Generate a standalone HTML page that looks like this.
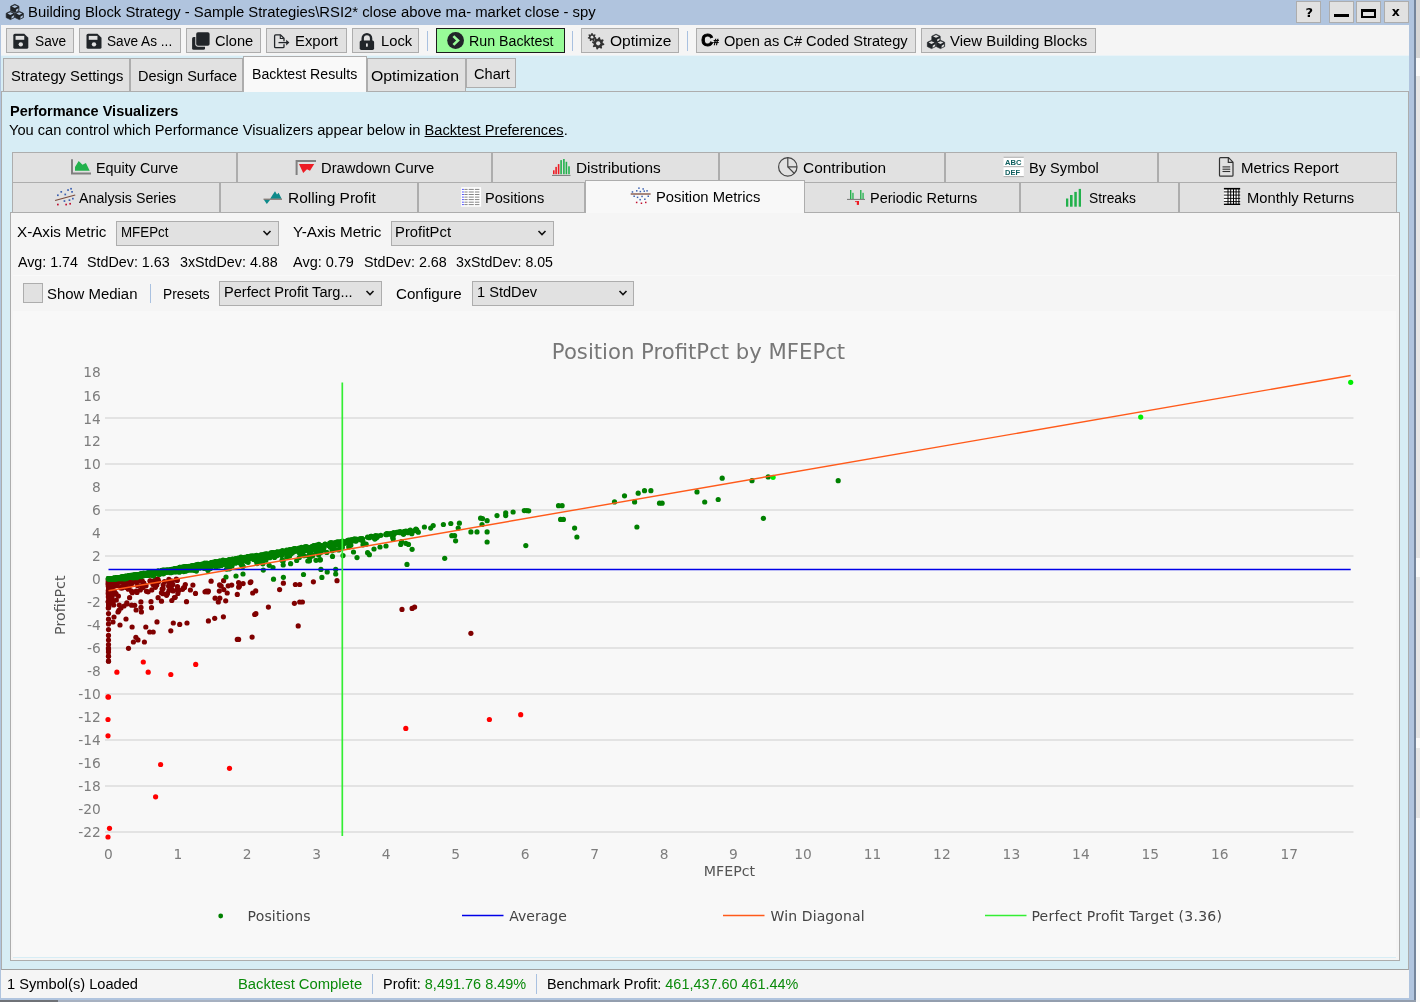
<!DOCTYPE html>
<html><head><meta charset="utf-8"><title>Building Block Strategy</title>
<style>
html,body{margin:0;padding:0}
body{width:1420px;height:1002px;overflow:hidden;background:#e4e4e4;position:relative;font-family:"Liberation Sans",sans-serif;font-size:15.5px;line-height:20px;color:#000}
div,span,svg{position:absolute;box-sizing:border-box}
span{white-space:nowrap;transform-origin:0 50%}
span span{position:static}
.btn{background:#e1e1e1;border:1px solid #adadad;top:28px;height:25px}
.tab{background:#e1e1e1;border:1px solid #adadad}
.sel{background:#e1e1e1;border:1px solid #adadad;height:25px}
.sep{width:1px;background:#a9c1e0}
.g{color:#0a8a0a}
</style></head><body><div id="w" style="left:0;top:0;width:1420px;height:1002px;will-change:transform">

<div style="left:0;top:0;width:1416px;height:1000px;background:#b0c4de"></div>
<div style="left:1414px;top:0;width:2px;height:1000px;background:#74859c"></div>
<div style="left:1416px;top:0;width:4px;height:1002px;background:#e6e6e6"></div>
<div style="left:1416px;top:0;width:4px;height:58px;background:#d6d6d6"></div>
<div style="left:1416px;top:58px;width:4px;height:18px;background:#fafafa"></div>
<div style="left:1416px;top:558px;width:4px;height:19px;background:#fafafa"></div>
<div style="left:1416px;top:738px;width:4px;height:10px;background:#fafafa"></div>
<div style="left:1416px;top:818px;width:4px;height:184px;background:#fafafa"></div>
<div style="left:0;top:1000px;width:1416px;height:2px;background:#939eae"></div>
<div style="left:58px;top:1000px;width:172px;height:2px;background:#a7b1c1"></div>
<div style="left:0;top:1000px;width:58px;height:2px;background:#6f7277"></div>
<div style="left:1px;top:25px;width:1408px;height:31px;background:#f5f5f5"></div>
<div style="left:1px;top:55px;width:1408px;height:1px;background:#eaf3f7"></div>
<div style="left:1px;top:56px;width:1408px;height:914px;background:#d7edf5"></div>
<div style="left:1px;top:91px;width:1408px;height:879px;border:1px solid #adadad;border-bottom-color:#a0a0a0"></div>
<div style="left:1px;top:970px;width:1408px;height:28px;background:#f5f5f5"></div>
<span style="left:27.9px;top:1.6px;transform:scaleX(0.9578);">Building Block Strategy - Sample Strategies\RSI2* close above ma- market close - spy</span>
<div class="btn" style="left:1296px;top:1px;width:25px;height:22px"></div>
<div class="btn" style="left:1329px;top:1px;width:25px;height:22px"></div>
<div class="btn" style="left:1356px;top:1px;width:25px;height:22px"></div>
<div class="btn" style="left:1384px;top:1px;width:25px;height:22px"></div>
<span style="left:1305.5px;top:2.6px;font-weight:bold;font-size:13px;font-family:'DejaVu Sans',sans-serif;line-height:20px">?</span>
<div style="left:1333.5px;top:14px;width:15px;height:3px;background:#000"></div>
<div style="left:1361px;top:9px;width:15px;height:9px;border:2px solid #000;border-top-width:3px"></div>
<span style="left:1391.8px;top:2.2px;font-weight:bold;font-size:12.5px;font-family:'DejaVu Sans',sans-serif;line-height:20px">x</span>
<div class="btn" style="left:6px;width:68px;"></div>
<span style="left:34.9px;top:30.6px;transform:scaleX(0.8828);">Save</span>
<div class="btn" style="left:79px;width:102px;"></div>
<span style="left:107.4px;top:30.6px;transform:scaleX(0.8798);">Save As ...</span>
<div class="btn" style="left:186px;width:75px;"></div>
<span style="left:214.9px;top:30.6px;transform:scaleX(0.9432);">Clone</span>
<div class="btn" style="left:266px;width:81px;"></div>
<span style="left:295.4px;top:30.6px;transform:scaleX(0.9596);">Export</span>
<div class="btn" style="left:352px;width:67px;"></div>
<span style="left:380.6px;top:30.6px;transform:scaleX(0.9527);">Lock</span>
<div class="btn" style="left:436px;width:129px;background:#98fb98;border-color:#1c1c1c;"></div>
<span style="left:469.1px;top:30.6px;transform:scaleX(0.9166);">Run Backtest</span>
<div class="btn" style="left:581px;width:98px;"></div>
<span style="left:609.9px;top:30.6px;transform:scaleX(1.0056);">Optimize</span>
<div class="btn" style="left:696px;width:220px;"></div>
<span style="left:723.8px;top:30.6px;transform:scaleX(0.9433);">Open as C# Coded Strategy</span>
<div class="btn" style="left:921px;width:175px;"></div>
<span style="left:950.1px;top:30.6px;transform:scaleX(0.9619);">View Building Blocks</span>
<div class="sep" style="left:427px;top:31px;height:20px"></div>
<div class="sep" style="left:572px;top:31px;height:20px"></div>
<div class="sep" style="left:687px;top:31px;height:20px"></div>
<div class="tab" style="left:3px;top:58px;width:127px;height:34px"></div>
<span style="left:10.7px;top:65.6px;transform:scaleX(0.9526);">Strategy Settings</span>
<div class="tab" style="left:130px;top:58px;width:113px;height:34px"></div>
<span style="left:137.7px;top:65.6px;transform:scaleX(0.9360);">Design Surface</span>
<div class="tab" style="left:367px;top:58px;width:99px;height:34px"></div>
<span style="left:371.4px;top:65.6px;transform:scaleX(1.0208);">Optimization</span>
<div class="tab" style="left:466px;top:58px;width:50px;height:30px"></div>
<span style="left:473.6px;top:63.6px;transform:scaleX(0.9418);">Chart</span>
<div class="tab" style="left:243px;top:56px;width:124px;height:36px;background:#f9f9f9;border-bottom:none"></div>
<span style="left:251.9px;top:63.6px;transform:scaleX(0.9113);">Backtest Results</span>
<span style="left:9.9px;top:100.6px;transform:scaleX(0.9356);font-weight:bold;">Performance Visualizers</span>
<span style="left:9.4px;top:120.1px;transform:scaleX(0.9439);">You can control which Performance Visualizers appear below in <u>Backtest Preferences</u>.</span>
<div class="tab" style="left:12px;top:152px;width:225px;height:31px"></div>
<span style="left:95.9px;top:157.6px;transform:scaleX(0.9264);">Equity Curve</span>
<div class="tab" style="left:237px;top:152px;width:255px;height:31px"></div>
<span style="left:320.9px;top:157.6px;transform:scaleX(0.9521);">Drawdown Curve</span>
<div class="tab" style="left:492px;top:152px;width:227px;height:31px"></div>
<span style="left:575.9px;top:157.6px;transform:scaleX(0.9932);">Distributions</span>
<div class="tab" style="left:719px;top:152px;width:226px;height:31px"></div>
<span style="left:802.9px;top:157.6px;transform:scaleX(0.9955);">Contribution</span>
<div class="tab" style="left:945px;top:152px;width:213px;height:31px"></div>
<span style="left:1028.8px;top:157.6px;transform:scaleX(0.9420);">By Symbol</span>
<div class="tab" style="left:1158px;top:152px;width:239px;height:31px"></div>
<span style="left:1240.9px;top:157.6px;transform:scaleX(0.9694);">Metrics Report</span>
<div class="tab" style="left:12px;top:182px;width:208px;height:31px"></div>
<span style="left:79.4px;top:187.6px;transform:scaleX(0.9173);">Analysis Series</span>
<div class="tab" style="left:220px;top:182px;width:198px;height:31px"></div>
<span style="left:287.9px;top:187.6px;transform:scaleX(0.9980);">Rolling Profit</span>
<div class="tab" style="left:418px;top:182px;width:167px;height:31px"></div>
<span style="left:485.4px;top:187.6px;transform:scaleX(0.9411);">Positions</span>
<div class="tab" style="left:804px;top:182px;width:216px;height:31px"></div>
<span style="left:870.4px;top:187.6px;transform:scaleX(0.9356);">Periodic Returns</span>
<div class="tab" style="left:1020px;top:182px;width:159px;height:31px"></div>
<span style="left:1089.1px;top:187.6px;transform:scaleX(0.8923);">Streaks</span>
<div class="tab" style="left:1179px;top:182px;width:218px;height:31px"></div>
<span style="left:1246.9px;top:187.6px;transform:scaleX(0.9499);">Monthly Returns</span>
<div style="left:10px;top:212px;width:1390px;height:749px;border:1px solid #adadad;background:#f5f5f5"></div>
<div style="left:13px;top:957px;width:1383px;height:1px;background:#d7edf5"></div>
<div class="tab" style="left:585px;top:180px;width:220px;height:33px;background:#f8f8f8;border-bottom:none"></div>
<span style="left:656.0px;top:186.6px;transform:scaleX(0.9533);">Position Metrics</span>
<div style="left:13px;top:311px;width:1383px;height:646px;background:#f8f8f8"></div>
<div style="left:13px;top:275px;width:1383px;height:1px;background:#f9f9f9"></div>
<span style="left:17.4px;top:221.6px;transform:scaleX(0.9798);">X-Axis Metric</span>
<div class="sel" style="left:116px;top:221px;width:163px"></div>
<span style="left:120.7px;top:222.1px;transform:scaleX(0.8608);">MFEPct</span>
<span style="left:293.3px;top:221.6px;transform:scaleX(0.9849);">Y-Axis Metric</span>
<div class="sel" style="left:391px;top:221px;width:163px"></div>
<span style="left:395.3px;top:222.1px;transform:scaleX(0.9560);">ProfitPct</span>
<span style="left:18.1px;top:251.6px;transform:scaleX(0.9192);">Avg: 1.74</span>
<span style="left:87.4px;top:251.6px;transform:scaleX(0.9229);">StdDev: 1.63</span>
<span style="left:179.9px;top:251.6px;transform:scaleX(0.9218);">3xStdDev: 4.88</span>
<span style="left:293.3px;top:251.6px;transform:scaleX(0.9338);">Avg: 0.79</span>
<span style="left:363.7px;top:251.6px;transform:scaleX(0.9240);">StdDev: 2.68</span>
<span style="left:456.0px;top:251.6px;transform:scaleX(0.9152);">3xStdDev: 8.05</span>
<div style="left:23px;top:283px;width:20px;height:20px;background:#e1e1e1;border:1px solid #adadad"></div>
<span style="left:46.9px;top:283.6px;transform:scaleX(0.9630);">Show Median</span>
<div class="sep" style="left:150px;top:284px;height:19px"></div>
<span style="left:162.7px;top:283.6px;transform:scaleX(0.8885);">Presets</span>
<div class="sel" style="left:219px;top:281px;width:163px"></div>
<span style="left:223.7px;top:281.6px;transform:scaleX(0.9412);">Perfect Profit Targ...</span>
<span style="left:396.3px;top:283.6px;transform:scaleX(0.9774);">Configure</span>
<div class="sel" style="left:472px;top:281px;width:162px"></div>
<span style="left:477.4px;top:281.6px;transform:scaleX(0.9425);">1 StdDev</span>
<svg style="left:262px;top:229px" width="10" height="8" viewBox="0 0 10 8"><path d="M1.5 2 L5 5.5 L8.5 2" fill="none" stroke="#111" stroke-width="1.6"/></svg>
<svg style="left:537px;top:229px" width="10" height="8" viewBox="0 0 10 8"><path d="M1.5 2 L5 5.5 L8.5 2" fill="none" stroke="#111" stroke-width="1.6"/></svg>
<svg style="left:365px;top:289px" width="10" height="8" viewBox="0 0 10 8"><path d="M1.5 2 L5 5.5 L8.5 2" fill="none" stroke="#111" stroke-width="1.6"/></svg>
<svg style="left:618px;top:289px" width="10" height="8" viewBox="0 0 10 8"><path d="M1.5 2 L5 5.5 L8.5 2" fill="none" stroke="#111" stroke-width="1.6"/></svg>
<span style="left:7.1px;top:973.6px;transform:scaleX(0.9444);">1 Symbol(s) Loaded</span>
<span style="left:237.9px;top:973.6px;transform:scaleX(0.9547);color:#0a8a0a;">Backtest Complete</span>
<div class="sep" style="left:372px;top:974px;height:20px"></div>
<span style="left:383.4px;top:973.6px;transform:scaleX(0.9336);">Profit: <span class="g">8,491.76 8.49%</span></span>
<div class="sep" style="left:536px;top:974px;height:20px"></div>
<span style="left:546.9px;top:973.6px;transform:scaleX(0.9284);">Benchmark Profit: <span class="g">461,437.60 461.44%</span></span>
<svg style="left:0;top:0" width="1420" height="1002" viewBox="0 0 1420 1002" font-family="'DejaVu Sans',Verdana,sans-serif">
<line x1="105" x2="1353.5" y1="418.0" y2="418.0" stroke="#dcdcdc" stroke-width="1.5"/>
<line x1="105" x2="1353.5" y1="464.0" y2="464.0" stroke="#dcdcdc" stroke-width="1.5"/>
<line x1="105" x2="1353.5" y1="510.0" y2="510.0" stroke="#dcdcdc" stroke-width="1.5"/>
<line x1="105" x2="1353.5" y1="556.0" y2="556.0" stroke="#dcdcdc" stroke-width="1.5"/>
<line x1="105" x2="1353.5" y1="602.0" y2="602.0" stroke="#dcdcdc" stroke-width="1.5"/>
<line x1="105" x2="1353.5" y1="648.0" y2="648.0" stroke="#dcdcdc" stroke-width="1.5"/>
<line x1="105" x2="1353.5" y1="694.0" y2="694.0" stroke="#dcdcdc" stroke-width="1.5"/>
<line x1="105" x2="1353.5" y1="740.0" y2="740.0" stroke="#dcdcdc" stroke-width="1.5"/>
<line x1="105" x2="1353.5" y1="786.0" y2="786.0" stroke="#dcdcdc" stroke-width="1.5"/>
<line x1="105" x2="1353.5" y1="832.0" y2="832.0" stroke="#dcdcdc" stroke-width="1.5"/>
<g font-size="13.8" fill="#7d7d7d" text-anchor="end">
<text x="100.8" y="377.0">18</text>
<text x="100.8" y="401.0">16</text>
<text x="100.8" y="424.0">14</text>
<text x="100.8" y="446.0">12</text>
<text x="100.8" y="469.0">10</text>
<text x="100.8" y="492.0">8</text>
<text x="100.8" y="515.0">6</text>
<text x="100.8" y="538.0">4</text>
<text x="100.8" y="561.0">2</text>
<text x="100.8" y="584.0">0</text>
<text x="100.8" y="607.0">-2</text>
<text x="100.8" y="630.0">-4</text>
<text x="100.8" y="653.0">-6</text>
<text x="100.8" y="676.0">-8</text>
<text x="100.8" y="699.0">-10</text>
<text x="100.8" y="722.0">-12</text>
<text x="100.8" y="745.0">-14</text>
<text x="100.8" y="768.0">-16</text>
<text x="100.8" y="791.0">-18</text>
<text x="100.8" y="814.0">-20</text>
<text x="100.8" y="837.0">-22</text>
</g><g font-size="13.8" fill="#7d7d7d" text-anchor="middle">
<text x="108.3" y="859">0</text>
<text x="177.8" y="859">1</text>
<text x="247.2" y="859">2</text>
<text x="316.7" y="859">3</text>
<text x="386.2" y="859">4</text>
<text x="455.7" y="859">5</text>
<text x="525.1" y="859">6</text>
<text x="594.6" y="859">7</text>
<text x="664.1" y="859">8</text>
<text x="733.5" y="859">9</text>
<text x="803.0" y="859">10</text>
<text x="872.5" y="859">11</text>
<text x="941.9" y="859">12</text>
<text x="1011.4" y="859">13</text>
<text x="1080.9" y="859">14</text>
<text x="1150.3" y="859">15</text>
<text x="1219.8" y="859">16</text>
<text x="1289.3" y="859">17</text>
</g>
<text x="698.5" y="359.3" font-size="21.2" fill="#777" text-anchor="middle">Position ProfitPct by MFEPct</text>
<text x="729.5" y="876" font-size="14.2" fill="#555" text-anchor="middle">MFEPct</text>
<text transform="translate(65,605.2) rotate(-90)" font-size="14.3" fill="#555" text-anchor="middle">ProfitPct</text>
<g fill="#800000">
<circle cx="113.9" cy="583.2" r="2.6"/><circle cx="109.6" cy="580.2" r="2.6"/><circle cx="112.7" cy="584.5" r="2.6"/><circle cx="110.5" cy="582.7" r="2.6"/><circle cx="113.9" cy="590.6" r="2.6"/><circle cx="114.5" cy="580.4" r="2.6"/><circle cx="123.4" cy="582.7" r="2.6"/><circle cx="109.4" cy="586.0" r="2.6"/><circle cx="132.0" cy="582.9" r="2.6"/><circle cx="113.8" cy="582.0" r="2.6"/><circle cx="108.5" cy="580.8" r="2.6"/><circle cx="109.2" cy="581.7" r="2.6"/><circle cx="115.2" cy="585.7" r="2.6"/><circle cx="128.9" cy="588.3" r="2.6"/><circle cx="111.4" cy="603.0" r="2.6"/><circle cx="115.3" cy="585.3" r="2.6"/><circle cx="122.1" cy="587.9" r="2.6"/><circle cx="111.4" cy="586.5" r="2.6"/><circle cx="108.8" cy="579.1" r="2.6"/><circle cx="113.9" cy="580.9" r="2.6"/><circle cx="113.2" cy="580.0" r="2.6"/><circle cx="120.9" cy="587.9" r="2.6"/><circle cx="116.3" cy="600.0" r="2.6"/><circle cx="141.9" cy="588.1" r="2.6"/><circle cx="117.0" cy="579.0" r="2.6"/><circle cx="108.7" cy="583.5" r="2.6"/><circle cx="132.4" cy="582.0" r="2.6"/><circle cx="114.1" cy="579.1" r="2.6"/><circle cx="112.0" cy="597.7" r="2.6"/><circle cx="114.5" cy="593.0" r="2.6"/><circle cx="108.4" cy="580.8" r="2.6"/><circle cx="109.7" cy="593.4" r="2.6"/><circle cx="109.0" cy="600.6" r="2.6"/><circle cx="110.5" cy="596.1" r="2.6"/><circle cx="113.3" cy="582.1" r="2.6"/><circle cx="131.9" cy="583.2" r="2.6"/><circle cx="116.6" cy="579.6" r="2.6"/><circle cx="109.1" cy="590.0" r="2.6"/><circle cx="110.5" cy="580.3" r="2.6"/><circle cx="111.4" cy="587.7" r="2.6"/><circle cx="115.7" cy="580.4" r="2.6"/><circle cx="117.3" cy="585.5" r="2.6"/><circle cx="111.4" cy="597.5" r="2.6"/><circle cx="110.3" cy="580.2" r="2.6"/><circle cx="109.5" cy="580.3" r="2.6"/><circle cx="114.5" cy="592.0" r="2.6"/><circle cx="109.5" cy="584.6" r="2.6"/><circle cx="114.2" cy="585.6" r="2.6"/><circle cx="112.0" cy="585.3" r="2.6"/><circle cx="108.4" cy="579.5" r="2.6"/><circle cx="112.1" cy="581.2" r="2.6"/><circle cx="118.1" cy="581.2" r="2.6"/><circle cx="120.4" cy="581.2" r="2.6"/><circle cx="109.0" cy="584.2" r="2.6"/><circle cx="111.7" cy="582.3" r="2.6"/><circle cx="118.4" cy="581.0" r="2.6"/><circle cx="116.0" cy="593.5" r="2.6"/><circle cx="112.5" cy="584.6" r="2.6"/><circle cx="126.2" cy="586.5" r="2.6"/><circle cx="109.7" cy="579.6" r="2.6"/><circle cx="108.9" cy="582.2" r="2.6"/><circle cx="108.9" cy="587.4" r="2.6"/><circle cx="112.1" cy="582.0" r="2.6"/><circle cx="113.3" cy="601.2" r="2.6"/><circle cx="125.3" cy="582.2" r="2.6"/><circle cx="119.0" cy="579.8" r="2.6"/><circle cx="171.5" cy="581.1" r="2.6"/><circle cx="157.4" cy="580.4" r="2.6"/><circle cx="111.5" cy="579.7" r="2.6"/><circle cx="116.8" cy="581.1" r="2.6"/><circle cx="119.2" cy="582.0" r="2.6"/><circle cx="151.7" cy="581.8" r="2.6"/><circle cx="131.6" cy="580.1" r="2.6"/><circle cx="115.4" cy="579.2" r="2.6"/><circle cx="143.8" cy="583.0" r="2.6"/><circle cx="120.0" cy="580.3" r="2.6"/><circle cx="154.2" cy="581.4" r="2.6"/><circle cx="114.7" cy="579.2" r="2.6"/><circle cx="123.8" cy="579.1" r="2.6"/><circle cx="136.0" cy="579.3" r="2.6"/><circle cx="156.1" cy="580.0" r="2.6"/><circle cx="177.3" cy="580.0" r="2.6"/><circle cx="154.9" cy="580.7" r="2.6"/><circle cx="123.8" cy="582.1" r="2.6"/><circle cx="138.2" cy="581.3" r="2.6"/><circle cx="119.1" cy="581.9" r="2.6"/><circle cx="177.1" cy="580.4" r="2.6"/><circle cx="172.2" cy="581.4" r="2.6"/><circle cx="142.2" cy="580.8" r="2.6"/><circle cx="121.8" cy="580.4" r="2.6"/><circle cx="164.5" cy="581.6" r="2.6"/><circle cx="128.6" cy="583.2" r="2.6"/><circle cx="141.2" cy="580.9" r="2.6"/><circle cx="118.1" cy="580.3" r="2.6"/><circle cx="155.9" cy="579.1" r="2.6"/><circle cx="156.8" cy="585.1" r="2.6"/><circle cx="111.4" cy="582.3" r="2.6"/><circle cx="158.0" cy="579.4" r="2.6"/><circle cx="130.7" cy="580.2" r="2.6"/><circle cx="112.0" cy="582.5" r="2.6"/><circle cx="132.5" cy="581.0" r="2.6"/><circle cx="156.6" cy="581.7" r="2.6"/><circle cx="127.5" cy="582.0" r="2.6"/><circle cx="176.3" cy="579.2" r="2.6"/><circle cx="114.7" cy="579.1" r="2.6"/><circle cx="158.7" cy="581.4" r="2.6"/><circle cx="119.1" cy="581.7" r="2.6"/><circle cx="168.9" cy="579.3" r="2.6"/><circle cx="134.7" cy="580.2" r="2.6"/><circle cx="114.6" cy="594.2" r="2.6"/><circle cx="171.8" cy="600.5" r="2.6"/><circle cx="195.5" cy="593.4" r="2.6"/><circle cx="146.0" cy="585.7" r="2.6"/><circle cx="184.5" cy="587.4" r="2.6"/><circle cx="183.5" cy="587.8" r="2.6"/><circle cx="151.0" cy="601.7" r="2.6"/><circle cx="172.9" cy="584.6" r="2.6"/><circle cx="169.0" cy="590.4" r="2.6"/><circle cx="142.1" cy="585.5" r="2.6"/><circle cx="219.3" cy="591.1" r="2.6"/><circle cx="205.0" cy="591.8" r="2.6"/><circle cx="135.6" cy="581.8" r="2.6"/><circle cx="186.5" cy="601.7" r="2.6"/><circle cx="118.9" cy="610.4" r="2.6"/><circle cx="129.6" cy="597.7" r="2.6"/><circle cx="239.3" cy="586.3" r="2.6"/><circle cx="156.5" cy="584.4" r="2.6"/><circle cx="243.1" cy="583.6" r="2.6"/><circle cx="238.6" cy="582.6" r="2.6"/><circle cx="171.4" cy="588.6" r="2.6"/><circle cx="137.5" cy="585.6" r="2.6"/><circle cx="156.6" cy="581.0" r="2.6"/><circle cx="207.8" cy="592.0" r="2.6"/><circle cx="150.4" cy="581.2" r="2.6"/><circle cx="158.1" cy="597.7" r="2.6"/><circle cx="132.3" cy="592.7" r="2.6"/><circle cx="128.3" cy="589.2" r="2.6"/><circle cx="146.5" cy="591.3" r="2.6"/><circle cx="163.0" cy="593.7" r="2.6"/><circle cx="126.8" cy="602.9" r="2.6"/><circle cx="231.7" cy="585.1" r="2.6"/><circle cx="161.4" cy="592.8" r="2.6"/><circle cx="124.7" cy="582.0" r="2.6"/><circle cx="140.3" cy="590.0" r="2.6"/><circle cx="185.3" cy="584.5" r="2.6"/><circle cx="168.6" cy="586.1" r="2.6"/><circle cx="152.3" cy="581.8" r="2.6"/><circle cx="119.3" cy="605.1" r="2.6"/><circle cx="167.5" cy="593.4" r="2.6"/><circle cx="163.2" cy="585.1" r="2.6"/><circle cx="206.4" cy="591.2" r="2.6"/><circle cx="176.9" cy="589.7" r="2.6"/><circle cx="175.2" cy="597.3" r="2.6"/><circle cx="182.6" cy="589.3" r="2.6"/><circle cx="154.3" cy="584.7" r="2.6"/><circle cx="136.2" cy="591.2" r="2.6"/><circle cx="130.9" cy="584.8" r="2.6"/><circle cx="208.4" cy="591.0" r="2.6"/><circle cx="141.0" cy="607.4" r="2.6"/><circle cx="141.4" cy="611.9" r="2.6"/><circle cx="152.2" cy="581.7" r="2.6"/><circle cx="250.2" cy="582.6" r="2.6"/><circle cx="137.0" cy="592.5" r="2.6"/><circle cx="174.4" cy="597.6" r="2.6"/><circle cx="171.1" cy="585.2" r="2.6"/><circle cx="153.0" cy="584.6" r="2.6"/><circle cx="151.5" cy="607.7" r="2.6"/><circle cx="252.7" cy="593.0" r="2.6"/><circle cx="227.2" cy="593.0" r="2.6"/><circle cx="190.4" cy="590.0" r="2.6"/><circle cx="177.9" cy="593.4" r="2.6"/><circle cx="151.8" cy="589.9" r="2.6"/><circle cx="126.1" cy="587.5" r="2.6"/><circle cx="161.5" cy="601.2" r="2.6"/><circle cx="134.7" cy="605.3" r="2.6"/><circle cx="169.6" cy="584.7" r="2.6"/><circle cx="179.0" cy="590.3" r="2.6"/><circle cx="162.1" cy="589.1" r="2.6"/><circle cx="150.0" cy="580.8" r="2.6"/><circle cx="166.6" cy="595.3" r="2.6"/><circle cx="163.1" cy="588.6" r="2.6"/><circle cx="223.8" cy="589.6" r="2.6"/><circle cx="118.4" cy="596.1" r="2.6"/><circle cx="169.0" cy="583.1" r="2.6"/><circle cx="143.1" cy="587.4" r="2.6"/><circle cx="173.1" cy="590.9" r="2.6"/><circle cx="192.9" cy="585.1" r="2.6"/><circle cx="155.4" cy="587.3" r="2.6"/><circle cx="143.4" cy="582.8" r="2.6"/><circle cx="148.1" cy="591.8" r="2.6"/><circle cx="128.2" cy="581.9" r="2.6"/><circle cx="131.6" cy="591.2" r="2.6"/><circle cx="126.5" cy="582.2" r="2.6"/><circle cx="211.1" cy="581.2" r="2.6"/><circle cx="219.6" cy="584.9" r="2.6"/><circle cx="122.1" cy="586.5" r="2.6"/><circle cx="221.2" cy="586.1" r="2.6"/><circle cx="238.7" cy="587.2" r="2.6"/><circle cx="177.5" cy="586.6" r="2.6"/><circle cx="136.1" cy="610.0" r="2.6"/><circle cx="113.7" cy="605.0" r="2.6"/><circle cx="131.6" cy="605.2" r="2.6"/><circle cx="140.9" cy="601.9" r="2.6"/><circle cx="114.9" cy="593.1" r="2.6"/><circle cx="108.5" cy="583.0" r="2.6"/><circle cx="108.6" cy="587.9" r="2.6"/><circle cx="108.7" cy="588.5" r="2.6"/><circle cx="108.6" cy="604.1" r="2.6"/><circle cx="108.4" cy="601.7" r="2.6"/><circle cx="108.3" cy="608.1" r="2.6"/><circle cx="108.3" cy="601.5" r="2.6"/><circle cx="108.5" cy="584.6" r="2.6"/><circle cx="108.5" cy="594.6" r="2.6"/><circle cx="108.5" cy="582.8" r="2.6"/><circle cx="108.6" cy="588.3" r="2.6"/><circle cx="108.8" cy="590.9" r="2.6"/><circle cx="108.5" cy="586.1" r="2.6"/><circle cx="108.8" cy="589.0" r="2.6"/><circle cx="108.6" cy="604.9" r="2.6"/><circle cx="108.5" cy="602.5" r="2.6"/><circle cx="108.4" cy="582.4" r="2.6"/><circle cx="108.3" cy="592.9" r="2.6"/><circle cx="108.7" cy="585.3" r="2.6"/><circle cx="108.5" cy="602.7" r="2.6"/><circle cx="108.4" cy="583.7" r="2.6"/><circle cx="108.6" cy="592.2" r="2.6"/><circle cx="108.8" cy="606.9" r="2.6"/><circle cx="108.4" cy="596.4" r="2.6"/><circle cx="108.5" cy="580.1" r="2.6"/><circle cx="108.5" cy="607.4" r="2.6"/><circle cx="108.5" cy="597.2" r="2.6"/><circle cx="108.7" cy="581.0" r="2.6"/><circle cx="108.8" cy="582.4" r="2.6"/><circle cx="108.5" cy="601.2" r="2.6"/><circle cx="108.3" cy="590.7" r="2.6"/><circle cx="108.4" cy="593.7" r="2.6"/><circle cx="108.3" cy="583.7" r="2.6"/><circle cx="108.4" cy="581.5" r="2.6"/><circle cx="108.3" cy="585.0" r="2.6"/><circle cx="108.6" cy="583.3" r="2.6"/><circle cx="108.7" cy="591.9" r="2.6"/><circle cx="108.4" cy="586.5" r="2.6"/><circle cx="108.7" cy="580.5" r="2.6"/><circle cx="108.7" cy="582.0" r="2.6"/><circle cx="108.5" cy="613.5" r="2.6"/><circle cx="108.5" cy="619.2" r="2.6"/><circle cx="108.5" cy="623.9" r="2.6"/><circle cx="108.5" cy="629.6" r="2.6"/><circle cx="108.5" cy="635.4" r="2.6"/><circle cx="108.5" cy="640.0" r="2.6"/><circle cx="108.5" cy="644.5" r="2.6"/><circle cx="108.5" cy="648.0" r="2.6"/><circle cx="108.5" cy="652.0" r="2.6"/><circle cx="108.5" cy="656.0" r="2.6"/><circle cx="108.5" cy="661.2" r="2.6"/><circle cx="128.5" cy="648.3" r="2.6"/><circle cx="133.4" cy="642.0" r="2.6"/><circle cx="135.9" cy="637.3" r="2.6"/><circle cx="138.0" cy="639.9" r="2.6"/><circle cx="144.4" cy="642.0" r="2.6"/><circle cx="149.7" cy="632.0" r="2.6"/><circle cx="153.2" cy="632.0" r="2.6"/><circle cx="170.8" cy="630.8" r="2.6"/><circle cx="132.1" cy="627.0" r="2.6"/><circle cx="145.8" cy="627.0" r="2.6"/><circle cx="157.0" cy="621.9" r="2.6"/><circle cx="173.3" cy="623.0" r="2.6"/><circle cx="179.7" cy="624.4" r="2.6"/><circle cx="187.0" cy="623.0" r="2.6"/><circle cx="208.4" cy="620.9" r="2.6"/><circle cx="214.7" cy="618.3" r="2.6"/><circle cx="223.4" cy="616.8" r="2.6"/><circle cx="237.3" cy="639.4" r="2.6"/><circle cx="238.6" cy="639.4" r="2.6"/><circle cx="252.1" cy="637.1" r="2.6"/><circle cx="254.7" cy="614.5" r="2.6"/><circle cx="255.9" cy="613.7" r="2.6"/><circle cx="268.4" cy="607.1" r="2.6"/><circle cx="294.4" cy="603.3" r="2.6"/><circle cx="299.7" cy="602.0" r="2.6"/><circle cx="302.4" cy="602.0" r="2.6"/><circle cx="298.2" cy="625.9" r="2.6"/><circle cx="337.0" cy="580.7" r="2.6"/><circle cx="313.4" cy="581.8" r="2.6"/><circle cx="295.4" cy="584.5" r="2.6"/><circle cx="299.7" cy="584.5" r="2.6"/><circle cx="283.4" cy="583.2" r="2.6"/><circle cx="279.6" cy="589.6" r="2.6"/><circle cx="255.7" cy="590.9" r="2.6"/><circle cx="250.9" cy="581.8" r="2.6"/><circle cx="237.3" cy="594.4" r="2.6"/><circle cx="225.7" cy="600.8" r="2.6"/><circle cx="219.8" cy="598.2" r="2.6"/><circle cx="215.1" cy="598.2" r="2.6"/><circle cx="218.3" cy="602.0" r="2.6"/><circle cx="228.2" cy="585.8" r="2.6"/><circle cx="223.6" cy="580.7" r="2.6"/><circle cx="402.0" cy="609.4" r="2.6"/><circle cx="412.1" cy="608.4" r="2.6"/><circle cx="414.6" cy="607.1" r="2.6"/><circle cx="470.9" cy="633.3" r="2.6"/><circle cx="108.5" cy="661.0" r="2.6"/><circle cx="108.5" cy="656.3" r="2.6"/><circle cx="108.5" cy="649.6" r="2.6"/><circle cx="114.0" cy="617.0" r="2.6"/><circle cx="118.0" cy="612.0" r="2.6"/><circle cx="121.0" cy="608.0" r="2.6"/><circle cx="124.0" cy="606.0" r="2.6"/><circle cx="127.0" cy="604.0" r="2.6"/><circle cx="113.0" cy="622.0" r="2.6"/><circle cx="120.0" cy="625.0" r="2.6"/><circle cx="126.0" cy="619.0" r="2.6"/>
</g>
<g fill="#ff0000">
<circle cx="108.5" cy="697.0" r="2.6"/><circle cx="116.9" cy="672.2" r="2.6"/><circle cx="143.3" cy="662.0" r="2.6"/><circle cx="148.2" cy="672.2" r="2.6"/><circle cx="170.8" cy="674.5" r="2.6"/><circle cx="195.7" cy="664.4" r="2.6"/><circle cx="108.0" cy="696.9" r="2.6"/><circle cx="108.0" cy="719.5" r="2.6"/><circle cx="108.0" cy="735.8" r="2.6"/><circle cx="160.6" cy="764.5" r="2.6"/><circle cx="229.5" cy="768.3" r="2.6"/><circle cx="155.6" cy="796.8" r="2.6"/><circle cx="109.5" cy="828.3" r="2.6"/><circle cx="108.0" cy="837.0" r="2.6"/><circle cx="405.8" cy="728.4" r="2.6"/><circle cx="489.4" cy="719.5" r="2.6"/><circle cx="520.7" cy="714.7" r="2.6"/>
</g>
<g fill="#008000">
<circle cx="120.8" cy="577.6" r="2.6"/><circle cx="112.9" cy="578.5" r="2.6"/><circle cx="115.6" cy="578.1" r="2.6"/><circle cx="183.7" cy="571.6" r="2.6"/><circle cx="257.7" cy="559.8" r="2.6"/><circle cx="237.7" cy="559.5" r="2.6"/><circle cx="168.9" cy="570.3" r="2.6"/><circle cx="212.3" cy="563.0" r="2.6"/><circle cx="229.2" cy="560.5" r="2.6"/><circle cx="267.3" cy="557.6" r="2.6"/><circle cx="149.7" cy="575.0" r="2.6"/><circle cx="192.6" cy="568.0" r="2.6"/><circle cx="199.1" cy="566.4" r="2.6"/><circle cx="338.0" cy="544.6" r="2.6"/><circle cx="349.8" cy="542.8" r="2.6"/><circle cx="155.6" cy="572.3" r="2.6"/><circle cx="139.7" cy="575.0" r="2.6"/><circle cx="153.9" cy="573.7" r="2.6"/><circle cx="176.0" cy="570.5" r="2.6"/><circle cx="145.0" cy="574.3" r="2.6"/><circle cx="176.3" cy="569.5" r="2.6"/><circle cx="172.1" cy="572.1" r="2.6"/><circle cx="181.8" cy="570.5" r="2.6"/><circle cx="320.9" cy="545.7" r="2.6"/><circle cx="123.4" cy="576.9" r="2.6"/><circle cx="112.4" cy="578.6" r="2.6"/><circle cx="110.3" cy="578.7" r="2.6"/><circle cx="142.9" cy="575.0" r="2.6"/><circle cx="158.8" cy="573.9" r="2.6"/><circle cx="243.2" cy="559.9" r="2.6"/><circle cx="120.4" cy="577.9" r="2.6"/><circle cx="318.2" cy="545.5" r="2.6"/><circle cx="237.8" cy="559.1" r="2.6"/><circle cx="347.8" cy="543.0" r="2.6"/><circle cx="164.0" cy="571.7" r="2.6"/><circle cx="131.2" cy="575.9" r="2.6"/><circle cx="348.5" cy="540.8" r="2.6"/><circle cx="125.8" cy="577.4" r="2.6"/><circle cx="189.2" cy="568.4" r="2.6"/><circle cx="298.5" cy="551.0" r="2.6"/><circle cx="189.1" cy="566.4" r="2.6"/><circle cx="332.5" cy="543.0" r="2.6"/><circle cx="304.4" cy="549.2" r="2.6"/><circle cx="193.5" cy="569.5" r="2.6"/><circle cx="266.3" cy="553.9" r="2.6"/><circle cx="309.2" cy="547.6" r="2.6"/><circle cx="175.8" cy="569.4" r="2.6"/><circle cx="194.3" cy="566.5" r="2.6"/><circle cx="299.2" cy="552.7" r="2.6"/><circle cx="152.6" cy="573.1" r="2.6"/><circle cx="157.3" cy="571.5" r="2.6"/><circle cx="170.2" cy="569.9" r="2.6"/><circle cx="133.1" cy="576.2" r="2.6"/><circle cx="330.2" cy="543.4" r="2.6"/><circle cx="218.3" cy="562.5" r="2.6"/><circle cx="321.4" cy="546.8" r="2.6"/><circle cx="141.6" cy="574.4" r="2.6"/><circle cx="114.1" cy="578.4" r="2.6"/><circle cx="204.5" cy="568.3" r="2.6"/><circle cx="161.7" cy="573.0" r="2.6"/><circle cx="147.6" cy="573.3" r="2.6"/><circle cx="137.6" cy="575.1" r="2.6"/><circle cx="109.7" cy="578.7" r="2.6"/><circle cx="111.4" cy="578.7" r="2.6"/><circle cx="293.5" cy="548.9" r="2.6"/><circle cx="247.0" cy="557.0" r="2.6"/><circle cx="211.7" cy="565.2" r="2.6"/><circle cx="128.7" cy="576.2" r="2.6"/><circle cx="169.8" cy="570.8" r="2.6"/><circle cx="165.5" cy="570.4" r="2.6"/><circle cx="125.5" cy="577.5" r="2.6"/><circle cx="161.3" cy="570.5" r="2.6"/><circle cx="109.5" cy="578.7" r="2.6"/><circle cx="213.4" cy="563.3" r="2.6"/><circle cx="197.2" cy="567.3" r="2.6"/><circle cx="206.7" cy="565.9" r="2.6"/><circle cx="211.5" cy="562.5" r="2.6"/><circle cx="320.0" cy="545.6" r="2.6"/><circle cx="121.4" cy="577.2" r="2.6"/><circle cx="241.3" cy="564.8" r="2.6"/><circle cx="108.4" cy="578.7" r="2.6"/><circle cx="162.0" cy="570.4" r="2.6"/><circle cx="111.6" cy="578.7" r="2.6"/><circle cx="237.0" cy="560.2" r="2.6"/><circle cx="203.0" cy="566.4" r="2.6"/><circle cx="264.7" cy="554.0" r="2.6"/><circle cx="286.7" cy="557.0" r="2.6"/><circle cx="246.0" cy="559.4" r="2.6"/><circle cx="274.3" cy="555.7" r="2.6"/><circle cx="142.5" cy="574.0" r="2.6"/><circle cx="260.6" cy="557.4" r="2.6"/><circle cx="290.2" cy="549.9" r="2.6"/><circle cx="210.3" cy="563.3" r="2.6"/><circle cx="158.2" cy="571.9" r="2.6"/><circle cx="158.1" cy="571.0" r="2.6"/><circle cx="127.1" cy="576.5" r="2.6"/><circle cx="172.4" cy="571.2" r="2.6"/><circle cx="276.6" cy="552.4" r="2.6"/><circle cx="156.3" cy="572.6" r="2.6"/><circle cx="239.3" cy="562.5" r="2.6"/><circle cx="126.3" cy="576.7" r="2.6"/><circle cx="232.0" cy="565.9" r="2.6"/><circle cx="282.5" cy="550.5" r="2.6"/><circle cx="154.1" cy="572.5" r="2.6"/><circle cx="248.5" cy="557.1" r="2.6"/><circle cx="307.7" cy="549.2" r="2.6"/><circle cx="146.4" cy="575.0" r="2.6"/><circle cx="112.1" cy="578.7" r="2.6"/><circle cx="168.9" cy="570.3" r="2.6"/><circle cx="347.3" cy="540.7" r="2.6"/><circle cx="241.8" cy="562.6" r="2.6"/><circle cx="215.1" cy="562.5" r="2.6"/><circle cx="139.3" cy="574.4" r="2.6"/><circle cx="181.4" cy="568.3" r="2.6"/><circle cx="126.1" cy="577.0" r="2.6"/><circle cx="289.2" cy="556.1" r="2.6"/><circle cx="140.3" cy="574.1" r="2.6"/><circle cx="324.0" cy="547.6" r="2.6"/><circle cx="139.8" cy="574.5" r="2.6"/><circle cx="161.8" cy="573.4" r="2.6"/><circle cx="130.1" cy="577.2" r="2.6"/><circle cx="202.8" cy="567.6" r="2.6"/><circle cx="108.3" cy="578.7" r="2.6"/><circle cx="121.1" cy="578.6" r="2.6"/><circle cx="265.7" cy="557.3" r="2.6"/><circle cx="224.8" cy="563.4" r="2.6"/><circle cx="118.8" cy="578.3" r="2.6"/><circle cx="113.9" cy="578.5" r="2.6"/><circle cx="178.5" cy="568.6" r="2.6"/><circle cx="265.0" cy="559.3" r="2.6"/><circle cx="279.6" cy="554.2" r="2.6"/><circle cx="210.4" cy="563.2" r="2.6"/><circle cx="111.0" cy="578.7" r="2.6"/><circle cx="230.2" cy="561.2" r="2.6"/><circle cx="184.1" cy="566.5" r="2.6"/><circle cx="180.0" cy="570.6" r="2.6"/><circle cx="127.6" cy="577.8" r="2.6"/><circle cx="146.5" cy="573.2" r="2.6"/><circle cx="113.0" cy="578.7" r="2.6"/><circle cx="350.8" cy="545.2" r="2.6"/><circle cx="116.1" cy="578.3" r="2.6"/><circle cx="122.5" cy="577.3" r="2.6"/><circle cx="138.4" cy="575.3" r="2.6"/><circle cx="213.4" cy="565.5" r="2.6"/><circle cx="155.2" cy="571.5" r="2.6"/><circle cx="235.9" cy="558.5" r="2.6"/><circle cx="301.4" cy="547.3" r="2.6"/><circle cx="132.6" cy="577.7" r="2.6"/><circle cx="204.7" cy="563.1" r="2.6"/><circle cx="331.1" cy="542.6" r="2.6"/><circle cx="340.2" cy="547.0" r="2.6"/><circle cx="152.8" cy="572.2" r="2.6"/><circle cx="256.0" cy="560.7" r="2.6"/><circle cx="127.5" cy="576.2" r="2.6"/><circle cx="110.9" cy="578.7" r="2.6"/><circle cx="116.0" cy="578.3" r="2.6"/><circle cx="149.5" cy="573.6" r="2.6"/><circle cx="269.9" cy="557.7" r="2.6"/><circle cx="199.0" cy="565.5" r="2.6"/><circle cx="121.0" cy="578.0" r="2.6"/><circle cx="146.8" cy="574.4" r="2.6"/><circle cx="239.0" cy="562.6" r="2.6"/><circle cx="118.0" cy="578.3" r="2.6"/><circle cx="198.8" cy="567.5" r="2.6"/><circle cx="223.2" cy="561.8" r="2.6"/><circle cx="143.5" cy="573.9" r="2.6"/><circle cx="266.7" cy="555.9" r="2.6"/><circle cx="153.3" cy="572.0" r="2.6"/><circle cx="113.3" cy="578.7" r="2.6"/><circle cx="130.5" cy="575.9" r="2.6"/><circle cx="136.4" cy="575.7" r="2.6"/><circle cx="195.1" cy="570.5" r="2.6"/><circle cx="125.1" cy="576.3" r="2.6"/><circle cx="211.3" cy="566.6" r="2.6"/><circle cx="121.9" cy="577.5" r="2.6"/><circle cx="129.9" cy="576.4" r="2.6"/><circle cx="133.8" cy="575.2" r="2.6"/><circle cx="233.2" cy="561.5" r="2.6"/><circle cx="225.7" cy="564.5" r="2.6"/><circle cx="259.1" cy="556.1" r="2.6"/><circle cx="147.9" cy="573.9" r="2.6"/><circle cx="147.3" cy="573.3" r="2.6"/><circle cx="206.9" cy="563.2" r="2.6"/><circle cx="292.5" cy="549.8" r="2.6"/><circle cx="242.0" cy="558.6" r="2.6"/><circle cx="211.8" cy="564.4" r="2.6"/><circle cx="182.0" cy="568.2" r="2.6"/><circle cx="219.7" cy="561.7" r="2.6"/><circle cx="151.3" cy="573.2" r="2.6"/><circle cx="185.6" cy="567.7" r="2.6"/><circle cx="112.6" cy="578.7" r="2.6"/><circle cx="257.0" cy="563.6" r="2.6"/><circle cx="227.9" cy="568.7" r="2.6"/><circle cx="227.0" cy="560.7" r="2.6"/><circle cx="281.7" cy="555.5" r="2.6"/><circle cx="301.2" cy="549.2" r="2.6"/><circle cx="111.2" cy="578.7" r="2.6"/><circle cx="136.3" cy="576.0" r="2.6"/><circle cx="243.3" cy="559.0" r="2.6"/><circle cx="261.4" cy="554.9" r="2.6"/><circle cx="248.7" cy="558.1" r="2.6"/><circle cx="212.3" cy="564.4" r="2.6"/><circle cx="347.6" cy="543.0" r="2.6"/><circle cx="120.7" cy="577.7" r="2.6"/><circle cx="140.4" cy="574.1" r="2.6"/><circle cx="141.8" cy="573.9" r="2.6"/><circle cx="251.5" cy="557.6" r="2.6"/><circle cx="116.0" cy="578.7" r="2.6"/><circle cx="131.7" cy="576.3" r="2.6"/><circle cx="187.6" cy="568.6" r="2.6"/><circle cx="287.0" cy="552.5" r="2.6"/><circle cx="112.9" cy="578.7" r="2.6"/><circle cx="142.9" cy="574.0" r="2.6"/><circle cx="306.1" cy="549.7" r="2.6"/><circle cx="276.5" cy="554.0" r="2.6"/><circle cx="289.5" cy="549.5" r="2.6"/><circle cx="116.8" cy="578.4" r="2.6"/><circle cx="277.3" cy="551.9" r="2.6"/><circle cx="214.3" cy="563.7" r="2.6"/><circle cx="112.0" cy="578.5" r="2.6"/><circle cx="289.7" cy="555.8" r="2.6"/><circle cx="290.3" cy="551.6" r="2.6"/><circle cx="222.5" cy="563.9" r="2.6"/><circle cx="206.8" cy="566.8" r="2.6"/><circle cx="127.2" cy="576.5" r="2.6"/><circle cx="116.9" cy="577.9" r="2.6"/><circle cx="198.4" cy="564.8" r="2.6"/><circle cx="176.5" cy="570.5" r="2.6"/><circle cx="124.3" cy="578.7" r="2.6"/><circle cx="134.3" cy="574.9" r="2.6"/><circle cx="305.7" cy="549.9" r="2.6"/><circle cx="116.3" cy="578.1" r="2.6"/><circle cx="150.4" cy="572.6" r="2.6"/><circle cx="197.8" cy="566.6" r="2.6"/><circle cx="258.6" cy="557.5" r="2.6"/><circle cx="192.6" cy="566.4" r="2.6"/><circle cx="130.4" cy="575.4" r="2.6"/><circle cx="218.1" cy="561.7" r="2.6"/><circle cx="153.2" cy="572.4" r="2.6"/><circle cx="200.2" cy="567.6" r="2.6"/><circle cx="226.8" cy="561.9" r="2.6"/><circle cx="147.5" cy="573.9" r="2.6"/><circle cx="114.4" cy="578.1" r="2.6"/><circle cx="144.7" cy="575.2" r="2.6"/><circle cx="166.2" cy="570.4" r="2.6"/><circle cx="138.5" cy="575.4" r="2.6"/><circle cx="149.5" cy="573.2" r="2.6"/><circle cx="155.7" cy="572.3" r="2.6"/><circle cx="313.4" cy="548.8" r="2.6"/><circle cx="164.7" cy="570.6" r="2.6"/><circle cx="285.5" cy="552.2" r="2.6"/><circle cx="286.6" cy="550.2" r="2.6"/><circle cx="126.0" cy="577.3" r="2.6"/><circle cx="276.9" cy="552.4" r="2.6"/><circle cx="179.0" cy="568.6" r="2.6"/><circle cx="173.5" cy="571.7" r="2.6"/><circle cx="322.3" cy="545.8" r="2.6"/><circle cx="218.7" cy="563.8" r="2.6"/><circle cx="224.8" cy="560.9" r="2.6"/><circle cx="154.7" cy="572.7" r="2.6"/><circle cx="152.8" cy="572.5" r="2.6"/><circle cx="121.7" cy="577.8" r="2.6"/><circle cx="173.6" cy="569.0" r="2.6"/><circle cx="309.9" cy="552.1" r="2.6"/><circle cx="196.4" cy="566.9" r="2.6"/><circle cx="194.7" cy="565.7" r="2.6"/><circle cx="149.7" cy="573.2" r="2.6"/><circle cx="127.7" cy="576.9" r="2.6"/><circle cx="231.9" cy="559.8" r="2.6"/><circle cx="305.1" cy="549.5" r="2.6"/><circle cx="362.0" cy="538.9" r="2.6"/><circle cx="134.9" cy="576.5" r="2.6"/><circle cx="253.6" cy="559.5" r="2.6"/><circle cx="124.0" cy="576.7" r="2.6"/><circle cx="135.8" cy="575.8" r="2.6"/><circle cx="196.4" cy="571.1" r="2.6"/><circle cx="242.8" cy="566.3" r="2.6"/><circle cx="111.9" cy="578.7" r="2.6"/><circle cx="116.5" cy="577.8" r="2.6"/><circle cx="121.0" cy="578.7" r="2.6"/><circle cx="277.8" cy="553.0" r="2.6"/><circle cx="299.9" cy="550.3" r="2.6"/><circle cx="211.8" cy="564.6" r="2.6"/><circle cx="128.7" cy="575.8" r="2.6"/><circle cx="120.2" cy="577.4" r="2.6"/><circle cx="109.9" cy="578.7" r="2.6"/><circle cx="312.7" cy="555.8" r="2.6"/><circle cx="185.7" cy="568.6" r="2.6"/><circle cx="232.5" cy="559.1" r="2.6"/><circle cx="260.3" cy="556.4" r="2.6"/><circle cx="165.3" cy="570.6" r="2.6"/><circle cx="170.0" cy="570.7" r="2.6"/><circle cx="161.8" cy="573.3" r="2.6"/><circle cx="300.9" cy="549.1" r="2.6"/><circle cx="262.7" cy="558.9" r="2.6"/><circle cx="240.9" cy="557.2" r="2.6"/><circle cx="302.7" cy="551.9" r="2.6"/><circle cx="257.0" cy="558.6" r="2.6"/><circle cx="273.9" cy="554.2" r="2.6"/><circle cx="132.9" cy="576.1" r="2.6"/><circle cx="267.7" cy="556.4" r="2.6"/><circle cx="171.0" cy="569.9" r="2.6"/><circle cx="186.7" cy="566.5" r="2.6"/><circle cx="235.3" cy="558.9" r="2.6"/><circle cx="145.7" cy="575.0" r="2.6"/><circle cx="148.9" cy="573.5" r="2.6"/><circle cx="109.5" cy="578.7" r="2.6"/><circle cx="129.7" cy="576.0" r="2.6"/><circle cx="205.4" cy="563.5" r="2.6"/><circle cx="222.0" cy="563.5" r="2.6"/><circle cx="184.0" cy="570.5" r="2.6"/><circle cx="363.0" cy="544.8" r="2.6"/><circle cx="127.7" cy="576.2" r="2.6"/><circle cx="226.5" cy="562.3" r="2.6"/><circle cx="194.6" cy="565.9" r="2.6"/><circle cx="261.4" cy="558.8" r="2.6"/><circle cx="299.1" cy="548.0" r="2.6"/><circle cx="279.3" cy="554.0" r="2.6"/><circle cx="310.4" cy="547.9" r="2.6"/><circle cx="199.9" cy="568.1" r="2.6"/><circle cx="177.2" cy="568.4" r="2.6"/><circle cx="306.7" cy="547.5" r="2.6"/><circle cx="247.4" cy="561.5" r="2.6"/><circle cx="169.9" cy="571.1" r="2.6"/><circle cx="165.2" cy="571.9" r="2.6"/><circle cx="130.8" cy="576.0" r="2.6"/><circle cx="233.8" cy="561.2" r="2.6"/><circle cx="323.5" cy="549.8" r="2.6"/><circle cx="123.5" cy="577.2" r="2.6"/><circle cx="163.9" cy="573.2" r="2.6"/><circle cx="116.9" cy="577.8" r="2.6"/><circle cx="192.2" cy="566.3" r="2.6"/><circle cx="318.9" cy="544.4" r="2.6"/><circle cx="332.1" cy="550.8" r="2.6"/><circle cx="125.4" cy="576.4" r="2.6"/><circle cx="320.0" cy="560.0" r="2.6"/><circle cx="178.0" cy="571.4" r="2.6"/><circle cx="171.8" cy="570.7" r="2.6"/><circle cx="153.8" cy="574.9" r="2.6"/><circle cx="111.3" cy="578.7" r="2.6"/><circle cx="311.9" cy="547.9" r="2.6"/><circle cx="215.8" cy="567.5" r="2.6"/><circle cx="133.9" cy="575.5" r="2.6"/><circle cx="122.4" cy="577.5" r="2.6"/><circle cx="204.8" cy="567.0" r="2.6"/><circle cx="316.0" cy="560.3" r="2.6"/><circle cx="153.6" cy="573.8" r="2.6"/><circle cx="218.3" cy="562.7" r="2.6"/><circle cx="143.0" cy="574.7" r="2.6"/><circle cx="143.5" cy="574.3" r="2.6"/><circle cx="248.1" cy="557.2" r="2.6"/><circle cx="286.7" cy="553.6" r="2.6"/><circle cx="270.8" cy="552.8" r="2.6"/><circle cx="125.5" cy="578.6" r="2.6"/><circle cx="132.0" cy="575.4" r="2.6"/><circle cx="179.7" cy="567.4" r="2.6"/><circle cx="191.2" cy="568.7" r="2.6"/><circle cx="124.0" cy="576.9" r="2.6"/><circle cx="141.9" cy="574.7" r="2.6"/><circle cx="114.6" cy="578.6" r="2.6"/><circle cx="125.9" cy="577.5" r="2.6"/><circle cx="157.5" cy="571.7" r="2.6"/><circle cx="121.8" cy="578.2" r="2.6"/><circle cx="228.2" cy="562.1" r="2.6"/><circle cx="173.0" cy="569.5" r="2.6"/><circle cx="143.7" cy="574.1" r="2.6"/><circle cx="163.7" cy="571.6" r="2.6"/><circle cx="186.3" cy="568.9" r="2.6"/><circle cx="265.9" cy="560.2" r="2.6"/><circle cx="109.9" cy="578.7" r="2.6"/><circle cx="116.6" cy="577.8" r="2.6"/><circle cx="200.0" cy="566.6" r="2.6"/><circle cx="235.4" cy="563.2" r="2.6"/><circle cx="119.3" cy="577.5" r="2.6"/><circle cx="118.2" cy="578.2" r="2.6"/><circle cx="144.1" cy="573.5" r="2.6"/><circle cx="336.3" cy="545.2" r="2.6"/><circle cx="325.0" cy="544.0" r="2.6"/><circle cx="412.1" cy="549.3" r="2.6"/><circle cx="350.3" cy="541.2" r="2.6"/><circle cx="166.1" cy="571.0" r="2.6"/><circle cx="119.8" cy="578.2" r="2.6"/><circle cx="262.3" cy="559.6" r="2.6"/><circle cx="186.7" cy="567.1" r="2.6"/><circle cx="305.6" cy="547.2" r="2.6"/><circle cx="188.0" cy="570.3" r="2.6"/><circle cx="132.2" cy="575.4" r="2.6"/><circle cx="119.1" cy="577.7" r="2.6"/><circle cx="115.3" cy="578.7" r="2.6"/><circle cx="266.4" cy="554.5" r="2.6"/><circle cx="180.8" cy="567.9" r="2.6"/><circle cx="163.2" cy="570.1" r="2.6"/><circle cx="259.6" cy="557.8" r="2.6"/><circle cx="221.3" cy="565.4" r="2.6"/><circle cx="113.2" cy="578.7" r="2.6"/><circle cx="127.8" cy="577.3" r="2.6"/><circle cx="194.3" cy="566.9" r="2.6"/><circle cx="210.9" cy="565.4" r="2.6"/><circle cx="280.6" cy="553.1" r="2.6"/><circle cx="109.4" cy="578.7" r="2.6"/><circle cx="247.4" cy="558.6" r="2.6"/><circle cx="200.6" cy="567.1" r="2.6"/><circle cx="146.2" cy="573.7" r="2.6"/><circle cx="314.9" cy="547.6" r="2.6"/><circle cx="120.3" cy="577.3" r="2.6"/><circle cx="187.0" cy="569.7" r="2.6"/><circle cx="150.8" cy="572.9" r="2.6"/><circle cx="301.6" cy="551.0" r="2.6"/><circle cx="164.0" cy="571.3" r="2.6"/><circle cx="193.7" cy="570.1" r="2.6"/><circle cx="116.3" cy="578.4" r="2.6"/><circle cx="322.2" cy="549.9" r="2.6"/><circle cx="191.8" cy="566.0" r="2.6"/><circle cx="401.5" cy="541.7" r="2.6"/><circle cx="307.8" cy="561.0" r="2.6"/><circle cx="163.1" cy="570.4" r="2.6"/><circle cx="254.9" cy="557.6" r="2.6"/><circle cx="148.8" cy="572.7" r="2.6"/><circle cx="136.0" cy="576.1" r="2.6"/><circle cx="160.9" cy="571.3" r="2.6"/><circle cx="208.3" cy="566.2" r="2.6"/><circle cx="116.4" cy="578.7" r="2.6"/><circle cx="304.4" cy="548.8" r="2.6"/><circle cx="204.3" cy="563.6" r="2.6"/><circle cx="287.3" cy="552.5" r="2.6"/><circle cx="112.6" cy="578.7" r="2.6"/><circle cx="215.2" cy="561.5" r="2.6"/><circle cx="316.1" cy="552.0" r="2.6"/><circle cx="178.8" cy="570.7" r="2.6"/><circle cx="205.2" cy="564.0" r="2.6"/><circle cx="228.6" cy="564.3" r="2.6"/><circle cx="136.2" cy="575.4" r="2.6"/><circle cx="118.4" cy="577.8" r="2.6"/><circle cx="133.8" cy="576.1" r="2.6"/><circle cx="121.3" cy="577.4" r="2.6"/><circle cx="139.4" cy="574.8" r="2.6"/><circle cx="141.6" cy="575.8" r="2.6"/><circle cx="338.7" cy="549.9" r="2.6"/><circle cx="171.7" cy="571.7" r="2.6"/><circle cx="129.9" cy="577.0" r="2.6"/><circle cx="163.3" cy="571.3" r="2.6"/><circle cx="190.2" cy="566.7" r="2.6"/><circle cx="123.2" cy="577.1" r="2.6"/><circle cx="196.2" cy="565.3" r="2.6"/><circle cx="127.9" cy="576.0" r="2.6"/><circle cx="291.4" cy="552.8" r="2.6"/><circle cx="133.0" cy="576.1" r="2.6"/><circle cx="149.0" cy="573.6" r="2.6"/><circle cx="193.9" cy="566.3" r="2.6"/><circle cx="286.8" cy="551.4" r="2.6"/><circle cx="125.2" cy="576.4" r="2.6"/><circle cx="186.0" cy="566.9" r="2.6"/><circle cx="170.2" cy="570.5" r="2.6"/><circle cx="245.7" cy="558.8" r="2.6"/><circle cx="256.0" cy="555.5" r="2.6"/><circle cx="159.4" cy="574.0" r="2.6"/><circle cx="199.0" cy="565.3" r="2.6"/><circle cx="115.5" cy="578.7" r="2.6"/><circle cx="310.1" cy="548.6" r="2.6"/><circle cx="212.5" cy="562.3" r="2.6"/><circle cx="118.9" cy="577.5" r="2.6"/><circle cx="374.8" cy="539.1" r="2.6"/><circle cx="148.8" cy="572.7" r="2.6"/><circle cx="271.3" cy="553.8" r="2.6"/><circle cx="318.2" cy="550.0" r="2.6"/><circle cx="189.4" cy="567.3" r="2.6"/><circle cx="192.2" cy="567.2" r="2.6"/><circle cx="136.1" cy="574.9" r="2.6"/><circle cx="133.5" cy="575.3" r="2.6"/><circle cx="138.3" cy="575.0" r="2.6"/><circle cx="109.1" cy="578.7" r="2.6"/><circle cx="204.8" cy="568.1" r="2.6"/><circle cx="124.4" cy="578.1" r="2.6"/><circle cx="260.9" cy="562.1" r="2.6"/><circle cx="129.9" cy="576.4" r="2.6"/><circle cx="180.3" cy="570.0" r="2.6"/><circle cx="149.3" cy="573.9" r="2.6"/><circle cx="123.9" cy="577.2" r="2.6"/><circle cx="198.1" cy="564.4" r="2.6"/><circle cx="261.0" cy="557.1" r="2.6"/><circle cx="228.5" cy="560.8" r="2.6"/><circle cx="127.8" cy="576.6" r="2.6"/><circle cx="130.1" cy="575.8" r="2.6"/><circle cx="109.0" cy="578.7" r="2.6"/><circle cx="133.7" cy="575.4" r="2.6"/><circle cx="152.4" cy="574.0" r="2.6"/><circle cx="135.1" cy="575.3" r="2.6"/><circle cx="115.1" cy="578.7" r="2.6"/><circle cx="318.7" cy="555.1" r="2.6"/><circle cx="256.4" cy="557.1" r="2.6"/><circle cx="187.9" cy="568.4" r="2.6"/><circle cx="124.3" cy="577.2" r="2.6"/><circle cx="198.8" cy="565.0" r="2.6"/><circle cx="204.7" cy="564.9" r="2.6"/><circle cx="117.4" cy="578.7" r="2.6"/><circle cx="166.1" cy="571.1" r="2.6"/><circle cx="173.3" cy="570.2" r="2.6"/><circle cx="148.4" cy="574.5" r="2.6"/><circle cx="282.1" cy="560.2" r="2.6"/><circle cx="133.1" cy="575.4" r="2.6"/><circle cx="245.2" cy="560.6" r="2.6"/><circle cx="129.0" cy="576.3" r="2.6"/><circle cx="135.5" cy="576.2" r="2.6"/><circle cx="320.4" cy="559.7" r="2.6"/><circle cx="218.5" cy="564.3" r="2.6"/><circle cx="210.4" cy="568.5" r="2.6"/><circle cx="179.0" cy="570.3" r="2.6"/><circle cx="306.6" cy="546.7" r="2.6"/><circle cx="247.5" cy="556.5" r="2.6"/><circle cx="231.6" cy="560.9" r="2.6"/><circle cx="200.9" cy="566.0" r="2.6"/><circle cx="304.8" cy="546.9" r="2.6"/><circle cx="266.0" cy="554.9" r="2.6"/><circle cx="273.5" cy="552.5" r="2.6"/><circle cx="204.0" cy="568.1" r="2.6"/><circle cx="138.8" cy="575.2" r="2.6"/><circle cx="122.5" cy="577.2" r="2.6"/><circle cx="141.7" cy="574.3" r="2.6"/><circle cx="155.3" cy="572.0" r="2.6"/><circle cx="132.7" cy="575.6" r="2.6"/><circle cx="348.7" cy="547.0" r="2.6"/><circle cx="296.6" cy="550.9" r="2.6"/><circle cx="229.5" cy="568.8" r="2.6"/><circle cx="182.2" cy="567.7" r="2.6"/><circle cx="193.5" cy="565.6" r="2.6"/><circle cx="138.1" cy="575.6" r="2.6"/><circle cx="141.1" cy="575.4" r="2.6"/><circle cx="153.4" cy="571.8" r="2.6"/><circle cx="135.7" cy="574.9" r="2.6"/><circle cx="191.1" cy="570.2" r="2.6"/><circle cx="123.3" cy="576.9" r="2.6"/><circle cx="212.4" cy="563.8" r="2.6"/><circle cx="131.1" cy="575.6" r="2.6"/><circle cx="161.4" cy="571.3" r="2.6"/><circle cx="265.9" cy="557.5" r="2.6"/><circle cx="127.6" cy="577.3" r="2.6"/><circle cx="124.2" cy="577.3" r="2.6"/><circle cx="159.9" cy="571.6" r="2.6"/><circle cx="195.1" cy="568.0" r="2.6"/><circle cx="183.5" cy="568.1" r="2.6"/><circle cx="155.9" cy="572.0" r="2.6"/><circle cx="121.9" cy="577.0" r="2.6"/><circle cx="121.3" cy="577.1" r="2.6"/><circle cx="211.2" cy="563.7" r="2.6"/><circle cx="254.6" cy="556.9" r="2.6"/><circle cx="293.9" cy="551.8" r="2.6"/><circle cx="218.5" cy="566.2" r="2.6"/><circle cx="109.0" cy="578.7" r="2.6"/><circle cx="216.3" cy="564.8" r="2.6"/><circle cx="161.6" cy="571.0" r="2.6"/><circle cx="120.7" cy="577.6" r="2.6"/><circle cx="110.6" cy="578.7" r="2.6"/><circle cx="185.6" cy="571.2" r="2.6"/><circle cx="287.0" cy="553.5" r="2.6"/><circle cx="206.0" cy="563.6" r="2.6"/><circle cx="208.0" cy="570.6" r="2.6"/><circle cx="131.5" cy="575.5" r="2.6"/><circle cx="264.6" cy="555.9" r="2.6"/><circle cx="146.4" cy="575.5" r="2.6"/><circle cx="214.7" cy="562.4" r="2.6"/><circle cx="277.6" cy="553.8" r="2.6"/><circle cx="174.5" cy="569.7" r="2.6"/><circle cx="117.3" cy="577.9" r="2.6"/><circle cx="145.0" cy="573.6" r="2.6"/><circle cx="130.2" cy="576.6" r="2.6"/><circle cx="228.3" cy="562.3" r="2.6"/><circle cx="151.3" cy="575.0" r="2.6"/><circle cx="269.4" cy="554.2" r="2.6"/><circle cx="123.4" cy="577.7" r="2.6"/><circle cx="117.4" cy="578.0" r="2.6"/><circle cx="126.8" cy="577.4" r="2.6"/><circle cx="131.8" cy="576.3" r="2.6"/><circle cx="170.5" cy="570.2" r="2.6"/><circle cx="240.6" cy="558.1" r="2.6"/><circle cx="282.8" cy="560.3" r="2.6"/><circle cx="202.4" cy="565.7" r="2.6"/><circle cx="109.6" cy="578.7" r="2.6"/><circle cx="200.0" cy="564.6" r="2.6"/><circle cx="298.9" cy="548.6" r="2.6"/><circle cx="187.2" cy="567.5" r="2.6"/><circle cx="108.5" cy="578.7" r="2.6"/><circle cx="289.0" cy="550.7" r="2.6"/><circle cx="180.8" cy="568.8" r="2.6"/><circle cx="127.6" cy="577.4" r="2.6"/><circle cx="206.0" cy="564.4" r="2.6"/><circle cx="308.7" cy="551.2" r="2.6"/><circle cx="166.3" cy="570.7" r="2.6"/><circle cx="309.5" cy="560.8" r="2.6"/><circle cx="307.1" cy="547.5" r="2.6"/><circle cx="142.0" cy="574.6" r="2.6"/><circle cx="146.8" cy="574.9" r="2.6"/><circle cx="158.0" cy="571.2" r="2.6"/><circle cx="197.5" cy="565.0" r="2.6"/><circle cx="145.0" cy="574.1" r="2.6"/><circle cx="123.3" cy="577.2" r="2.6"/><circle cx="245.6" cy="561.1" r="2.6"/><circle cx="150.3" cy="573.1" r="2.6"/><circle cx="153.0" cy="572.4" r="2.6"/><circle cx="188.1" cy="567.3" r="2.6"/><circle cx="281.4" cy="552.6" r="2.6"/><circle cx="216.1" cy="564.0" r="2.6"/><circle cx="292.4" cy="552.6" r="2.6"/><circle cx="248.1" cy="562.3" r="2.6"/><circle cx="159.9" cy="572.1" r="2.6"/><circle cx="206.0" cy="564.8" r="2.6"/><circle cx="295.5" cy="548.6" r="2.6"/><circle cx="133.0" cy="575.8" r="2.6"/><circle cx="195.6" cy="565.2" r="2.6"/><circle cx="209.9" cy="566.2" r="2.6"/><circle cx="143.7" cy="573.2" r="2.6"/><circle cx="175.1" cy="568.9" r="2.6"/><circle cx="243.4" cy="557.6" r="2.6"/><circle cx="262.3" cy="555.5" r="2.6"/><circle cx="112.4" cy="578.7" r="2.6"/><circle cx="175.3" cy="568.7" r="2.6"/><circle cx="243.5" cy="558.8" r="2.6"/><circle cx="171.9" cy="570.0" r="2.6"/><circle cx="203.0" cy="565.6" r="2.6"/><circle cx="216.5" cy="562.5" r="2.6"/><circle cx="260.0" cy="556.1" r="2.6"/><circle cx="244.7" cy="558.5" r="2.6"/><circle cx="180.0" cy="567.4" r="2.6"/><circle cx="158.6" cy="572.2" r="2.6"/><circle cx="209.1" cy="564.5" r="2.6"/><circle cx="145.9" cy="574.6" r="2.6"/><circle cx="179.7" cy="568.1" r="2.6"/><circle cx="145.7" cy="574.1" r="2.6"/><circle cx="145.2" cy="573.8" r="2.6"/><circle cx="144.8" cy="574.0" r="2.6"/><circle cx="156.0" cy="572.9" r="2.6"/><circle cx="243.0" cy="566.3" r="2.6"/><circle cx="236.3" cy="561.4" r="2.6"/><circle cx="311.3" cy="554.2" r="2.6"/><circle cx="239.8" cy="559.1" r="2.6"/><circle cx="313.9" cy="546.1" r="2.6"/><circle cx="267.9" cy="555.1" r="2.6"/><circle cx="211.9" cy="562.8" r="2.6"/><circle cx="170.9" cy="571.3" r="2.6"/><circle cx="220.5" cy="561.5" r="2.6"/><circle cx="140.4" cy="574.6" r="2.6"/><circle cx="148.1" cy="573.3" r="2.6"/><circle cx="320.7" cy="552.4" r="2.6"/><circle cx="160.7" cy="571.8" r="2.6"/><circle cx="166.9" cy="570.2" r="2.6"/><circle cx="125.7" cy="577.6" r="2.6"/><circle cx="277.4" cy="555.2" r="2.6"/><circle cx="247.0" cy="557.8" r="2.6"/><circle cx="131.7" cy="576.1" r="2.6"/><circle cx="277.3" cy="553.6" r="2.6"/><circle cx="298.9" cy="550.5" r="2.6"/><circle cx="276.5" cy="555.8" r="2.6"/><circle cx="302.1" cy="551.2" r="2.6"/><circle cx="115.3" cy="578.7" r="2.6"/><circle cx="140.6" cy="574.3" r="2.6"/><circle cx="393.2" cy="539.1" r="2.6"/><circle cx="329.1" cy="545.5" r="2.6"/><circle cx="299.6" cy="548.7" r="2.6"/><circle cx="366.1" cy="544.2" r="2.6"/><circle cx="328.3" cy="545.5" r="2.6"/><circle cx="241.6" cy="559.0" r="2.6"/><circle cx="237.6" cy="560.0" r="2.6"/><circle cx="247.6" cy="557.2" r="2.6"/><circle cx="160.1" cy="574.1" r="2.6"/><circle cx="203.6" cy="565.1" r="2.6"/><circle cx="309.1" cy="551.6" r="2.6"/><circle cx="190.9" cy="568.0" r="2.6"/><circle cx="159.6" cy="572.9" r="2.6"/><circle cx="179.2" cy="568.2" r="2.6"/><circle cx="250.5" cy="556.1" r="2.6"/><circle cx="200.6" cy="566.7" r="2.6"/><circle cx="196.1" cy="565.4" r="2.6"/><circle cx="350.0" cy="545.1" r="2.6"/><circle cx="204.2" cy="565.7" r="2.6"/><circle cx="154.4" cy="572.7" r="2.6"/><circle cx="123.0" cy="577.3" r="2.6"/><circle cx="116.4" cy="578.3" r="2.6"/><circle cx="310.0" cy="557.4" r="2.6"/><circle cx="183.1" cy="568.3" r="2.6"/><circle cx="261.9" cy="558.6" r="2.6"/><circle cx="229.4" cy="559.9" r="2.6"/><circle cx="274.5" cy="557.5" r="2.6"/><circle cx="285.5" cy="553.1" r="2.6"/><circle cx="341.9" cy="546.4" r="2.6"/><circle cx="146.4" cy="573.6" r="2.6"/><circle cx="179.1" cy="571.9" r="2.6"/><circle cx="304.0" cy="555.7" r="2.6"/><circle cx="276.3" cy="554.4" r="2.6"/><circle cx="301.3" cy="550.9" r="2.6"/><circle cx="147.7" cy="573.3" r="2.6"/><circle cx="135.3" cy="576.3" r="2.6"/><circle cx="136.6" cy="575.1" r="2.6"/><circle cx="131.3" cy="577.0" r="2.6"/><circle cx="125.7" cy="577.9" r="2.6"/><circle cx="263.2" cy="554.5" r="2.6"/><circle cx="222.6" cy="563.1" r="2.6"/><circle cx="142.7" cy="575.0" r="2.6"/><circle cx="221.1" cy="564.1" r="2.6"/><circle cx="113.8" cy="578.2" r="2.6"/><circle cx="234.3" cy="562.6" r="2.6"/><circle cx="262.4" cy="558.1" r="2.6"/><circle cx="288.8" cy="553.9" r="2.6"/><circle cx="124.0" cy="577.9" r="2.6"/><circle cx="192.9" cy="566.1" r="2.6"/><circle cx="161.6" cy="573.3" r="2.6"/><circle cx="206.5" cy="564.7" r="2.6"/><circle cx="312.2" cy="549.7" r="2.6"/><circle cx="283.0" cy="561.3" r="2.6"/><circle cx="140.2" cy="574.9" r="2.6"/><circle cx="113.6" cy="578.5" r="2.6"/><circle cx="127.7" cy="576.9" r="2.6"/><circle cx="195.8" cy="570.3" r="2.6"/><circle cx="108.6" cy="578.7" r="2.6"/><circle cx="153.4" cy="572.2" r="2.6"/><circle cx="135.2" cy="575.1" r="2.6"/><circle cx="172.5" cy="569.4" r="2.6"/><circle cx="304.9" cy="550.4" r="2.6"/><circle cx="162.0" cy="571.4" r="2.6"/><circle cx="250.5" cy="558.0" r="2.6"/><circle cx="262.8" cy="563.8" r="2.6"/><circle cx="188.4" cy="566.6" r="2.6"/><circle cx="196.0" cy="565.2" r="2.6"/><circle cx="147.7" cy="573.1" r="2.6"/><circle cx="152.4" cy="573.3" r="2.6"/><circle cx="171.1" cy="570.6" r="2.6"/><circle cx="332.0" cy="543.8" r="2.6"/><circle cx="260.5" cy="555.0" r="2.6"/><circle cx="122.0" cy="577.5" r="2.6"/><circle cx="123.0" cy="577.6" r="2.6"/><circle cx="116.5" cy="578.5" r="2.6"/><circle cx="301.5" cy="553.1" r="2.6"/><circle cx="171.6" cy="569.3" r="2.6"/><circle cx="291.4" cy="553.4" r="2.6"/><circle cx="209.0" cy="564.9" r="2.6"/><circle cx="109.3" cy="578.7" r="2.6"/><circle cx="243.8" cy="558.2" r="2.6"/><circle cx="238.2" cy="558.1" r="2.6"/><circle cx="226.1" cy="562.8" r="2.6"/><circle cx="201.3" cy="565.3" r="2.6"/><circle cx="154.9" cy="572.3" r="2.6"/><circle cx="113.6" cy="578.7" r="2.6"/><circle cx="193.7" cy="565.6" r="2.6"/><circle cx="223.0" cy="564.4" r="2.6"/><circle cx="129.1" cy="576.5" r="2.6"/><circle cx="226.9" cy="563.0" r="2.6"/><circle cx="115.8" cy="578.5" r="2.6"/><circle cx="312.3" cy="546.3" r="2.6"/><circle cx="109.7" cy="578.7" r="2.6"/><circle cx="153.8" cy="573.5" r="2.6"/><circle cx="226.5" cy="569.1" r="2.6"/><circle cx="254.0" cy="557.2" r="2.6"/><circle cx="252.9" cy="556.1" r="2.6"/><circle cx="134.6" cy="575.6" r="2.6"/><circle cx="243.6" cy="558.1" r="2.6"/><circle cx="158.7" cy="574.2" r="2.6"/><circle cx="141.5" cy="575.0" r="2.6"/><circle cx="133.0" cy="576.3" r="2.6"/><circle cx="179.6" cy="572.0" r="2.6"/><circle cx="198.4" cy="564.9" r="2.6"/><circle cx="180.5" cy="568.2" r="2.6"/><circle cx="330.3" cy="547.2" r="2.6"/><circle cx="213.0" cy="563.4" r="2.6"/><circle cx="215.7" cy="561.8" r="2.6"/><circle cx="138.3" cy="576.4" r="2.6"/><circle cx="335.0" cy="549.7" r="2.6"/><circle cx="130.3" cy="575.8" r="2.6"/><circle cx="296.7" cy="560.5" r="2.6"/><circle cx="184.6" cy="567.1" r="2.6"/><circle cx="147.5" cy="573.8" r="2.6"/><circle cx="207.4" cy="568.9" r="2.6"/><circle cx="130.1" cy="577.1" r="2.6"/><circle cx="131.3" cy="575.5" r="2.6"/><circle cx="197.0" cy="565.5" r="2.6"/><circle cx="131.0" cy="575.8" r="2.6"/><circle cx="363.0" cy="541.7" r="2.6"/><circle cx="182.2" cy="567.1" r="2.6"/><circle cx="120.0" cy="577.8" r="2.6"/><circle cx="174.8" cy="568.6" r="2.6"/><circle cx="148.5" cy="574.0" r="2.6"/><circle cx="314.1" cy="545.6" r="2.6"/><circle cx="163.3" cy="573.8" r="2.6"/><circle cx="124.4" cy="577.0" r="2.6"/><circle cx="251.0" cy="556.4" r="2.6"/><circle cx="418.3" cy="532.2" r="2.6"/><circle cx="109.4" cy="578.7" r="2.6"/><circle cx="141.9" cy="573.6" r="2.6"/><circle cx="117.3" cy="577.9" r="2.6"/><circle cx="218.9" cy="562.7" r="2.6"/><circle cx="143.0" cy="575.1" r="2.6"/><circle cx="191.6" cy="565.9" r="2.6"/><circle cx="117.7" cy="577.6" r="2.6"/><circle cx="158.2" cy="571.3" r="2.6"/><circle cx="113.7" cy="578.7" r="2.6"/><circle cx="125.7" cy="576.3" r="2.6"/><circle cx="342.3" cy="547.5" r="2.6"/><circle cx="122.6" cy="577.2" r="2.6"/><circle cx="131.9" cy="576.0" r="2.6"/><circle cx="137.5" cy="574.7" r="2.6"/><circle cx="123.5" cy="577.2" r="2.6"/><circle cx="156.9" cy="572.5" r="2.6"/><circle cx="179.3" cy="568.3" r="2.6"/><circle cx="288.3" cy="555.7" r="2.6"/><circle cx="152.5" cy="574.2" r="2.6"/><circle cx="127.0" cy="576.3" r="2.6"/><circle cx="213.9" cy="563.9" r="2.6"/><circle cx="111.4" cy="578.7" r="2.6"/><circle cx="228.0" cy="565.5" r="2.6"/><circle cx="245.5" cy="559.6" r="2.6"/><circle cx="140.4" cy="574.4" r="2.6"/><circle cx="242.8" cy="558.8" r="2.6"/><circle cx="171.4" cy="569.6" r="2.6"/><circle cx="164.7" cy="570.1" r="2.6"/><circle cx="122.3" cy="577.2" r="2.6"/><circle cx="269.2" cy="565.3" r="2.6"/><circle cx="112.3" cy="578.7" r="2.6"/><circle cx="134.4" cy="576.1" r="2.6"/><circle cx="165.9" cy="571.0" r="2.6"/><circle cx="117.8" cy="578.3" r="2.6"/><circle cx="326.8" cy="552.4" r="2.6"/><circle cx="152.4" cy="572.2" r="2.6"/><circle cx="165.0" cy="571.9" r="2.6"/><circle cx="223.0" cy="560.2" r="2.6"/><circle cx="194.9" cy="565.7" r="2.6"/><circle cx="299.3" cy="557.5" r="2.6"/><circle cx="148.5" cy="575.5" r="2.6"/><circle cx="191.5" cy="568.5" r="2.6"/><circle cx="131.9" cy="575.8" r="2.6"/><circle cx="114.5" cy="578.7" r="2.6"/><circle cx="201.4" cy="564.9" r="2.6"/><circle cx="194.4" cy="567.8" r="2.6"/><circle cx="311.5" cy="554.3" r="2.6"/><circle cx="156.0" cy="572.5" r="2.6"/><circle cx="254.5" cy="557.8" r="2.6"/><circle cx="109.5" cy="578.7" r="2.6"/><circle cx="108.7" cy="578.7" r="2.6"/><circle cx="131.8" cy="575.3" r="2.6"/><circle cx="316.7" cy="545.0" r="2.6"/><circle cx="149.6" cy="573.1" r="2.6"/><circle cx="121.8" cy="577.6" r="2.6"/><circle cx="228.2" cy="562.4" r="2.6"/><circle cx="310.4" cy="550.2" r="2.6"/><circle cx="202.0" cy="564.0" r="2.6"/><circle cx="131.2" cy="576.5" r="2.6"/><circle cx="300.7" cy="554.1" r="2.6"/><circle cx="141.9" cy="574.3" r="2.6"/><circle cx="166.9" cy="570.4" r="2.6"/><circle cx="115.8" cy="578.0" r="2.6"/><circle cx="276.4" cy="554.5" r="2.6"/><circle cx="191.3" cy="566.2" r="2.6"/><circle cx="309.4" cy="549.5" r="2.6"/><circle cx="137.3" cy="575.4" r="2.6"/><circle cx="112.1" cy="578.7" r="2.6"/><circle cx="220.6" cy="565.6" r="2.6"/><circle cx="142.7" cy="575.1" r="2.6"/><circle cx="113.9" cy="578.6" r="2.6"/><circle cx="162.2" cy="571.2" r="2.6"/><circle cx="198.7" cy="565.9" r="2.6"/><circle cx="133.8" cy="575.7" r="2.6"/><circle cx="411.8" cy="533.7" r="2.6"/><circle cx="113.7" cy="578.2" r="2.6"/><circle cx="146.6" cy="573.8" r="2.6"/><circle cx="219.9" cy="560.9" r="2.6"/><circle cx="159.0" cy="571.7" r="2.6"/><circle cx="272.7" cy="552.9" r="2.6"/><circle cx="162.0" cy="571.6" r="2.6"/><circle cx="344.8" cy="541.8" r="2.6"/><circle cx="146.4" cy="574.0" r="2.6"/><circle cx="183.4" cy="568.0" r="2.6"/><circle cx="188.5" cy="566.5" r="2.6"/><circle cx="337.3" cy="544.3" r="2.6"/><circle cx="254.5" cy="557.5" r="2.6"/><circle cx="404.0" cy="531.7" r="2.6"/><circle cx="252.1" cy="556.6" r="2.6"/><circle cx="329.7" cy="543.1" r="2.6"/><circle cx="168.2" cy="570.6" r="2.6"/><circle cx="404.5" cy="532.8" r="2.6"/><circle cx="213.1" cy="564.1" r="2.6"/><circle cx="184.9" cy="567.1" r="2.6"/><circle cx="414.5" cy="530.7" r="2.6"/><circle cx="154.2" cy="572.9" r="2.6"/><circle cx="161.7" cy="571.9" r="2.6"/><circle cx="338.5" cy="542.1" r="2.6"/><circle cx="237.7" cy="559.1" r="2.6"/><circle cx="362.3" cy="538.9" r="2.6"/><circle cx="111.5" cy="578.7" r="2.6"/><circle cx="344.3" cy="543.1" r="2.6"/><circle cx="402.6" cy="533.0" r="2.6"/><circle cx="209.4" cy="564.6" r="2.6"/><circle cx="190.5" cy="568.3" r="2.6"/><circle cx="221.4" cy="562.0" r="2.6"/><circle cx="225.2" cy="561.3" r="2.6"/><circle cx="142.4" cy="574.5" r="2.6"/><circle cx="235.2" cy="561.9" r="2.6"/><circle cx="304.9" cy="549.1" r="2.6"/><circle cx="183.8" cy="568.8" r="2.6"/><circle cx="392.6" cy="534.2" r="2.6"/><circle cx="333.4" cy="546.7" r="2.6"/><circle cx="341.7" cy="541.5" r="2.6"/><circle cx="311.1" cy="547.2" r="2.6"/><circle cx="226.0" cy="560.6" r="2.6"/><circle cx="275.0" cy="552.8" r="2.6"/><circle cx="212.3" cy="563.1" r="2.6"/><circle cx="369.2" cy="537.7" r="2.6"/><circle cx="370.4" cy="536.9" r="2.6"/><circle cx="398.4" cy="532.2" r="2.6"/><circle cx="338.4" cy="542.6" r="2.6"/><circle cx="123.1" cy="578.7" r="2.6"/><circle cx="377.3" cy="536.7" r="2.6"/><circle cx="213.2" cy="562.8" r="2.6"/><circle cx="350.3" cy="540.2" r="2.6"/><circle cx="174.5" cy="571.7" r="2.6"/><circle cx="213.5" cy="562.3" r="2.6"/><circle cx="209.4" cy="563.6" r="2.6"/><circle cx="116.3" cy="578.7" r="2.6"/><circle cx="130.1" cy="577.1" r="2.6"/><circle cx="129.2" cy="576.3" r="2.6"/><circle cx="251.1" cy="557.0" r="2.6"/><circle cx="232.5" cy="560.3" r="2.6"/><circle cx="204.1" cy="567.3" r="2.6"/><circle cx="303.8" cy="548.7" r="2.6"/><circle cx="386.4" cy="534.7" r="2.6"/><circle cx="335.1" cy="543.3" r="2.6"/><circle cx="285.5" cy="553.2" r="2.6"/><circle cx="141.0" cy="576.7" r="2.6"/><circle cx="268.6" cy="554.6" r="2.6"/><circle cx="257.9" cy="557.6" r="2.6"/><circle cx="314.0" cy="547.2" r="2.6"/><circle cx="172.6" cy="570.0" r="2.6"/><circle cx="404.7" cy="531.7" r="2.6"/><circle cx="323.4" cy="546.4" r="2.6"/><circle cx="119.1" cy="578.7" r="2.6"/><circle cx="291.0" cy="551.6" r="2.6"/><circle cx="241.0" cy="558.7" r="2.6"/><circle cx="136.8" cy="577.7" r="2.6"/><circle cx="352.2" cy="539.7" r="2.6"/><circle cx="218.5" cy="561.9" r="2.6"/><circle cx="356.1" cy="541.1" r="2.6"/><circle cx="176.0" cy="572.0" r="2.6"/><circle cx="242.3" cy="560.6" r="2.6"/><circle cx="226.0" cy="561.1" r="2.6"/><circle cx="170.7" cy="572.7" r="2.6"/><circle cx="201.6" cy="565.4" r="2.6"/><circle cx="166.1" cy="572.3" r="2.6"/><circle cx="277.4" cy="553.9" r="2.6"/><circle cx="152.6" cy="572.4" r="2.6"/><circle cx="404.0" cy="532.7" r="2.6"/><circle cx="354.1" cy="539.0" r="2.6"/><circle cx="165.0" cy="571.9" r="2.6"/><circle cx="343.1" cy="541.8" r="2.6"/><circle cx="376.8" cy="537.4" r="2.6"/><circle cx="172.4" cy="571.7" r="2.6"/><circle cx="115.5" cy="578.7" r="2.6"/><circle cx="386.7" cy="533.7" r="2.6"/><circle cx="403.5" cy="534.3" r="2.6"/><circle cx="281.4" cy="551.3" r="2.6"/><circle cx="152.7" cy="574.2" r="2.6"/><circle cx="239.3" cy="560.0" r="2.6"/><circle cx="294.4" cy="548.9" r="2.6"/><circle cx="238.2" cy="559.4" r="2.6"/><circle cx="267.0" cy="554.1" r="2.6"/><circle cx="110.1" cy="578.7" r="2.6"/><circle cx="213.5" cy="562.8" r="2.6"/><circle cx="181.6" cy="570.0" r="2.6"/><circle cx="187.3" cy="567.5" r="2.6"/><circle cx="294.7" cy="548.9" r="2.6"/><circle cx="387.8" cy="534.0" r="2.6"/><circle cx="331.1" cy="544.7" r="2.6"/><circle cx="339.9" cy="541.9" r="2.6"/><circle cx="192.6" cy="568.0" r="2.6"/><circle cx="367.5" cy="537.2" r="2.6"/><circle cx="400.2" cy="531.6" r="2.6"/><circle cx="245.1" cy="557.5" r="2.6"/><circle cx="354.6" cy="539.2" r="2.6"/><circle cx="317.8" cy="546.1" r="2.6"/><circle cx="305.8" cy="548.3" r="2.6"/><circle cx="416.7" cy="529.9" r="2.6"/><circle cx="184.1" cy="569.3" r="2.6"/><circle cx="169.8" cy="570.3" r="2.6"/><circle cx="299.4" cy="549.4" r="2.6"/><circle cx="202.0" cy="564.7" r="2.6"/><circle cx="134.6" cy="576.2" r="2.6"/><circle cx="168.0" cy="570.5" r="2.6"/><circle cx="165.1" cy="571.9" r="2.6"/><circle cx="256.6" cy="558.9" r="2.6"/><circle cx="258.6" cy="556.3" r="2.6"/><circle cx="400.4" cy="532.3" r="2.6"/><circle cx="291.3" cy="549.6" r="2.6"/><circle cx="153.0" cy="572.6" r="2.6"/><circle cx="325.1" cy="544.3" r="2.6"/><circle cx="407.2" cy="531.4" r="2.6"/><circle cx="239.7" cy="558.7" r="2.6"/><circle cx="217.1" cy="562.2" r="2.6"/><circle cx="155.4" cy="573.3" r="2.6"/><circle cx="375.5" cy="535.6" r="2.6"/><circle cx="370.9" cy="536.3" r="2.6"/><circle cx="333.5" cy="543.7" r="2.6"/><circle cx="392.8" cy="534.3" r="2.6"/><circle cx="232.5" cy="560.3" r="2.6"/><circle cx="279.6" cy="551.8" r="2.6"/><circle cx="313.2" cy="546.1" r="2.6"/><circle cx="153.2" cy="575.9" r="2.6"/><circle cx="221.4" cy="562.5" r="2.6"/><circle cx="290.7" cy="551.6" r="2.6"/><circle cx="317.7" cy="547.0" r="2.6"/><circle cx="278.1" cy="554.6" r="2.6"/><circle cx="232.7" cy="559.4" r="2.6"/><circle cx="385.8" cy="534.4" r="2.6"/><circle cx="355.8" cy="540.0" r="2.6"/><circle cx="256.6" cy="555.4" r="2.6"/><circle cx="261.5" cy="556.4" r="2.6"/><circle cx="216.4" cy="564.2" r="2.6"/><circle cx="272.8" cy="554.4" r="2.6"/><circle cx="255.7" cy="556.2" r="2.6"/><circle cx="211.1" cy="564.2" r="2.6"/><circle cx="351.3" cy="540.8" r="2.6"/><circle cx="188.9" cy="567.4" r="2.6"/><circle cx="220.5" cy="562.2" r="2.6"/><circle cx="390.5" cy="534.1" r="2.6"/><circle cx="211.0" cy="563.0" r="2.6"/><circle cx="362.2" cy="538.9" r="2.6"/><circle cx="115.0" cy="578.7" r="2.6"/><circle cx="168.0" cy="572.3" r="2.6"/><circle cx="153.7" cy="573.2" r="2.6"/><circle cx="178.8" cy="569.1" r="2.6"/><circle cx="335.0" cy="542.6" r="2.6"/><circle cx="330.9" cy="545.9" r="2.6"/><circle cx="278.6" cy="553.4" r="2.6"/><circle cx="393.3" cy="535.4" r="2.6"/><circle cx="242.5" cy="559.3" r="2.6"/><circle cx="167.9" cy="569.9" r="2.6"/><circle cx="227.6" cy="562.9" r="2.6"/><circle cx="137.1" cy="576.7" r="2.6"/><circle cx="292.9" cy="550.9" r="2.6"/><circle cx="410.3" cy="530.2" r="2.6"/><circle cx="146.7" cy="573.5" r="2.6"/><circle cx="115.0" cy="578.7" r="2.6"/><circle cx="143.0" cy="576.0" r="2.6"/><circle cx="158.4" cy="572.3" r="2.6"/><circle cx="316.2" cy="547.1" r="2.6"/><circle cx="408.0" cy="532.7" r="2.6"/><circle cx="242.6" cy="560.6" r="2.6"/><circle cx="229.1" cy="559.7" r="2.6"/><circle cx="409.6" cy="530.9" r="2.6"/><circle cx="415.9" cy="529.0" r="2.6"/><circle cx="163.9" cy="571.4" r="2.6"/><circle cx="155.4" cy="573.3" r="2.6"/><circle cx="126.5" cy="578.6" r="2.6"/><circle cx="272.2" cy="552.7" r="2.6"/><circle cx="244.2" cy="557.5" r="2.6"/><circle cx="352.8" cy="540.7" r="2.6"/><circle cx="380.8" cy="535.3" r="2.6"/><circle cx="294.1" cy="549.7" r="2.6"/><circle cx="399.9" cy="532.7" r="2.6"/><circle cx="374.0" cy="537.4" r="2.6"/><circle cx="152.3" cy="573.4" r="2.6"/><circle cx="162.4" cy="572.4" r="2.6"/><circle cx="109.7" cy="578.7" r="2.6"/><circle cx="356.3" cy="539.0" r="2.6"/><circle cx="110.0" cy="578.7" r="2.6"/><circle cx="355.0" cy="540.8" r="2.6"/><circle cx="284.5" cy="551.7" r="2.6"/><circle cx="333.5" cy="545.6" r="2.6"/><circle cx="403.7" cy="532.8" r="2.6"/><circle cx="395.5" cy="533.1" r="2.6"/><circle cx="224.7" cy="561.3" r="2.6"/><circle cx="191.4" cy="568.1" r="2.6"/><circle cx="351.9" cy="540.9" r="2.6"/><circle cx="362.2" cy="539.9" r="2.6"/><circle cx="206.7" cy="563.5" r="2.6"/><circle cx="342.5" cy="541.1" r="2.6"/><circle cx="157.3" cy="573.6" r="2.6"/><circle cx="373.4" cy="537.0" r="2.6"/><circle cx="393.6" cy="532.5" r="2.6"/><circle cx="133.9" cy="577.7" r="2.6"/><circle cx="154.4" cy="573.1" r="2.6"/><circle cx="343.6" cy="543.7" r="2.6"/><circle cx="289.6" cy="551.1" r="2.6"/><circle cx="240.4" cy="558.4" r="2.6"/><circle cx="348.5" cy="540.2" r="2.6"/><circle cx="140.1" cy="574.5" r="2.6"/><circle cx="377.6" cy="535.8" r="2.6"/><circle cx="244.9" cy="557.3" r="2.6"/><circle cx="334.1" cy="543.5" r="2.6"/><circle cx="308.9" cy="547.9" r="2.6"/><circle cx="331.4" cy="543.8" r="2.6"/><circle cx="174.6" cy="569.4" r="2.6"/><circle cx="222.8" cy="561.7" r="2.6"/><circle cx="392.7" cy="537.5" r="2.6"/><circle cx="240.2" cy="559.7" r="2.6"/><circle cx="285.1" cy="551.3" r="2.6"/><circle cx="249.3" cy="558.7" r="2.6"/><circle cx="375.3" cy="538.5" r="2.6"/><circle cx="254.5" cy="557.6" r="2.6"/><circle cx="145.0" cy="573.6" r="2.6"/><circle cx="318.4" cy="545.8" r="2.6"/><circle cx="124.8" cy="578.7" r="2.6"/><circle cx="337.2" cy="541.9" r="2.6"/><circle cx="148.8" cy="573.9" r="2.6"/><circle cx="185.3" cy="568.0" r="2.6"/><circle cx="360.2" cy="539.7" r="2.6"/><circle cx="135.2" cy="575.6" r="2.6"/><circle cx="371.5" cy="536.4" r="2.6"/><circle cx="251.9" cy="556.2" r="2.6"/><circle cx="253.3" cy="556.2" r="2.6"/><circle cx="214.4" cy="564.5" r="2.6"/><circle cx="396.7" cy="532.3" r="2.6"/><circle cx="360.2" cy="538.7" r="2.6"/><circle cx="145.4" cy="574.2" r="2.6"/><circle cx="212.3" cy="564.1" r="2.6"/><circle cx="158.9" cy="572.8" r="2.6"/><circle cx="351.2" cy="540.2" r="2.6"/><circle cx="185.6" cy="567.8" r="2.6"/><circle cx="388.5" cy="533.9" r="2.6"/><circle cx="297.8" cy="550.9" r="2.6"/><circle cx="303.3" cy="547.9" r="2.6"/><circle cx="273.1" cy="553.4" r="2.6"/><circle cx="138.7" cy="575.9" r="2.6"/><circle cx="390.8" cy="533.7" r="2.6"/><circle cx="338.5" cy="543.7" r="2.6"/><circle cx="180.0" cy="570.5" r="2.6"/><circle cx="405.7" cy="531.1" r="2.6"/><circle cx="393.7" cy="533.7" r="2.6"/><circle cx="400.7" cy="544.4" r="2.6"/><circle cx="405.8" cy="543.3" r="2.6"/><circle cx="408.5" cy="544.4" r="2.6"/><circle cx="407.0" cy="564.4" r="2.6"/><circle cx="444.7" cy="558.3" r="2.6"/><circle cx="443.4" cy="524.5" r="2.6"/><circle cx="450.8" cy="523.5" r="2.6"/><circle cx="459.4" cy="523.2" r="2.6"/><circle cx="458.2" cy="528.1" r="2.6"/><circle cx="451.8" cy="535.7" r="2.6"/><circle cx="454.6" cy="535.7" r="2.6"/><circle cx="455.6" cy="540.8" r="2.6"/><circle cx="470.9" cy="531.9" r="2.6"/><circle cx="477.0" cy="531.9" r="2.6"/><circle cx="480.6" cy="518.2" r="2.6"/><circle cx="482.5" cy="518.6" r="2.6"/><circle cx="482.0" cy="524.5" r="2.6"/><circle cx="487.1" cy="520.7" r="2.6"/><circle cx="487.1" cy="531.9" r="2.6"/><circle cx="487.1" cy="542.0" r="2.6"/><circle cx="497.0" cy="515.6" r="2.6"/><circle cx="505.7" cy="512.9" r="2.6"/><circle cx="505.7" cy="515.6" r="2.6"/><circle cx="513.1" cy="512.0" r="2.6"/><circle cx="524.3" cy="510.6" r="2.6"/><circle cx="526.8" cy="510.6" r="2.6"/><circle cx="528.7" cy="510.8" r="2.6"/><circle cx="525.8" cy="545.6" r="2.6"/><circle cx="558.5" cy="505.7" r="2.6"/><circle cx="562.1" cy="505.7" r="2.6"/><circle cx="560.6" cy="519.4" r="2.6"/><circle cx="563.4" cy="519.4" r="2.6"/><circle cx="574.6" cy="528.1" r="2.6"/><circle cx="576.9" cy="537.0" r="2.6"/><circle cx="614.5" cy="501.9" r="2.6"/><circle cx="624.5" cy="495.8" r="2.6"/><circle cx="634.6" cy="501.9" r="2.6"/><circle cx="638.2" cy="493.2" r="2.6"/><circle cx="644.5" cy="490.7" r="2.6"/><circle cx="650.9" cy="490.7" r="2.6"/><circle cx="636.9" cy="527.0" r="2.6"/><circle cx="659.5" cy="503.2" r="2.6"/><circle cx="662.1" cy="503.2" r="2.6"/><circle cx="424.4" cy="527.0" r="2.6"/><circle cx="430.7" cy="528.1" r="2.6"/><circle cx="433.2" cy="525.6" r="2.6"/><circle cx="697.0" cy="491.9" r="2.6"/><circle cx="704.7" cy="502.0" r="2.6"/><circle cx="718.2" cy="499.5" r="2.6"/><circle cx="722.2" cy="478.2" r="2.6"/><circle cx="752.0" cy="480.7" r="2.6"/><circle cx="763.4" cy="518.3" r="2.6"/><circle cx="768.2" cy="476.9" r="2.6"/><circle cx="838.2" cy="480.7" r="2.6"/><circle cx="263.3" cy="570.1" r="2.6"/><circle cx="273.0" cy="567.5" r="2.6"/><circle cx="283.2" cy="565.0" r="2.6"/><circle cx="290.6" cy="563.7" r="2.6"/><circle cx="308.4" cy="556.1" r="2.6"/><circle cx="320.9" cy="569.4" r="2.6"/><circle cx="335.7" cy="569.4" r="2.6"/><circle cx="303.5" cy="574.5" r="2.6"/><circle cx="327.2" cy="571.9" r="2.6"/><circle cx="321.9" cy="577.4" r="2.6"/><circle cx="335.7" cy="574.0" r="2.6"/><circle cx="273.5" cy="579.2" r="2.6"/><circle cx="283.4" cy="577.3" r="2.6"/><circle cx="236.0" cy="576.0" r="2.6"/><circle cx="243.0" cy="574.0" r="2.6"/><circle cx="226.0" cy="577.0" r="2.6"/><circle cx="332.5" cy="556.4" r="2.6"/><circle cx="343.0" cy="555.6" r="2.6"/><circle cx="357.0" cy="557.6" r="2.6"/><circle cx="367.6" cy="552.7" r="2.6"/><circle cx="369.4" cy="554.7" r="2.6"/><circle cx="353.5" cy="552.0" r="2.6"/><circle cx="374.0" cy="549.0" r="2.6"/><circle cx="380.0" cy="547.0" r="2.6"/><circle cx="386.0" cy="546.0" r="2.6"/>
</g>
<g fill="#00ee00">
<circle cx="773.1" cy="477.3" r="2.6"/><circle cx="1140.7" cy="417.1" r="2.6"/><circle cx="1350.7" cy="382.3" r="2.6"/>
</g>
<line x1="108.5" x2="1350.7" y1="569.5" y2="569.5" stroke="#0000e8" stroke-width="1.4"/>
<line x1="108.5" x2="1350.7" y1="590.8" y2="375.5" stroke="#ff5a1a" stroke-width="1.4"/>
<line x1="342.3" x2="342.3" y1="382.5" y2="836" stroke="#33ee33" stroke-width="1.7"/>
<g font-size="14" fill="#444">
<circle cx="220.7" cy="916" r="2.4" fill="#008000"/><text x="247.6" y="920.7" textLength="63" lengthAdjust="spacing">Positions</text>
<line x1="462" x2="503.5" y1="915.5" y2="915.5" stroke="#0000e8" stroke-width="1.4"/><text x="509.3" y="920.7" textLength="57.5" lengthAdjust="spacing">Average</text>
<line x1="723" x2="764.5" y1="915.5" y2="915.5" stroke="#ff5a1a" stroke-width="1.4"/><text x="770.6" y="920.7" textLength="94" lengthAdjust="spacing">Win Diagonal</text>
<line x1="985" x2="1026.5" y1="915.5" y2="915.5" stroke="#33ee33" stroke-width="1.4"/><text x="1031.4" y="920.7" textLength="190.5" lengthAdjust="spacing">Perfect Profit Target (3.36)</text>
</g>
<polygon points="14.80,4.31 18.94,6.30 18.94,10.60 14.80,12.59 10.66,10.60 10.66,6.30" fill="#212529" stroke="#212529" stroke-width="0.7" stroke-linejoin="round"/><polygon points="14.80,5.25 17.74,6.58 14.80,7.92 11.86,6.58" fill="#b0c4de"/><polygon points="15.96,9.70 18.36,8.36 18.36,10.32 15.96,11.74" fill="#b0c4de"/><polygon points="10.35,11.31 14.49,13.30 14.49,17.60 10.35,19.59 6.21,17.60 6.21,13.30" fill="#212529" stroke="#212529" stroke-width="0.7" stroke-linejoin="round"/><polygon points="10.35,12.25 13.29,13.58 10.35,14.92 7.41,13.58" fill="#b0c4de"/><polygon points="11.51,16.70 13.91,15.36 13.91,17.32 11.51,18.74" fill="#b0c4de"/><polygon points="19.25,11.31 23.39,13.30 23.39,17.60 19.25,19.59 15.11,17.60 15.11,13.30" fill="#212529" stroke="#212529" stroke-width="0.7" stroke-linejoin="round"/><polygon points="19.25,12.25 22.19,13.58 19.25,14.92 16.31,13.58" fill="#b0c4de"/><polygon points="20.41,16.70 22.81,15.36 22.81,17.32 20.41,18.74" fill="#b0c4de"/>
<path d="M14.9,33.8 H24.25 L28.3,37.849999999999994 V47.199999999999996 Q28.3,48.8 26.7,48.8 H14.9 Q13.3,48.8 13.3,47.199999999999996 V35.4 Q13.3,33.8 14.9,33.8 Z" fill="#212529"/><rect x="15.55" y="35.90" width="8.70" height="3.90" fill="#e1e1e1"/><circle cx="20.80" cy="44.30" r="2.17" fill="#e1e1e1"/>
<path d="M88.1,33.8 H97.45 L101.5,37.849999999999994 V47.199999999999996 Q101.5,48.8 99.9,48.8 H88.1 Q86.5,48.8 86.5,47.199999999999996 V35.4 Q86.5,33.8 88.1,33.8 Z" fill="#212529"/><rect x="88.75" y="35.90" width="8.70" height="3.90" fill="#e1e1e1"/><circle cx="94.00" cy="44.30" r="2.17" fill="#e1e1e1"/>
<rect x="192.1" y="37.099999999999994" width="12.9" height="12.7" rx="1.6" fill="#212529"/><rect x="195.29999999999998" y="31.4" width="15.2" height="15.3" rx="2.4" fill="#e1e1e1"/><rect x="196.2" y="32.3" width="13.4" height="13.5" rx="1.8" fill="#212529"/>
<path d="M284,41.3 V38.3 L280.5,34.9 H275.6 Q274.6,34.9 274.6,35.9 V46.699999999999996 Q274.6,47.699999999999996 275.6,47.699999999999996 H283 Q284,47.699999999999996 284,46.699999999999996 V44.3" fill="none" stroke="#212529" stroke-width="1.3"/><path d="M280.3,35.099999999999994 V38.5 H283.8" fill="none" stroke="#212529" stroke-width="1.1"/><path d="M278.5,42.599999999999994 H287.6" stroke="#212529" stroke-width="1.3" fill="none"/><path d="M286.2,39.699999999999996 L289.4,42.599999999999994 L286.2,45.5 Z" fill="#212529"/>
<path d="M362.7,41.4 V38.3 A4.2,4.2 0 0 1 371.09999999999997,38.3 V41.4" fill="none" stroke="#212529" stroke-width="2.4"/><rect x="359.7" y="40.5" width="14.4" height="9.4" rx="1.6" fill="#212529"/><rect x="366.0" y="43.3" width="1.8" height="3.6" rx="0.8" fill="#e1e1e1"/>
<circle cx="455.6" cy="40.5" r="8.4" fill="#212529"/><path d="M453.40000000000003,36.1 L458.0,40.5 L453.40000000000003,44.9" fill="none" stroke="#98fb98" stroke-width="2.6" stroke-linejoin="miter"/>
<polygon points="596.27,37.68 596.06,38.62 594.54,38.80 594.12,39.32 594.29,40.84 593.42,41.26 592.34,40.18 591.66,40.18 590.58,41.26 589.71,40.84 589.88,39.32 589.46,38.80 587.94,38.62 587.73,37.68 589.02,36.86 589.17,36.21 588.36,34.91 588.96,34.16 590.40,34.66 591.01,34.37 591.52,32.93 592.48,32.93 592.99,34.37 593.60,34.66 595.04,34.16 595.64,34.91 594.83,36.21 594.98,36.86" fill="#333"/><circle cx="592.0" cy="37.2" r="1.4" fill="#e1e1e1"/><polygon points="604.37,43.91 604.13,45.10 602.26,45.47 601.76,46.22 602.13,48.09 601.12,48.77 599.54,47.70 598.65,47.88 597.59,49.47 596.40,49.23 596.03,47.36 595.28,46.86 593.41,47.23 592.73,46.22 593.80,44.64 593.62,43.75 592.03,42.69 592.27,41.50 594.14,41.13 594.64,40.38 594.27,38.51 595.28,37.83 596.86,38.90 597.75,38.72 598.81,37.13 600.00,37.37 600.37,39.24 601.12,39.74 602.99,39.37 603.67,40.38 602.60,41.96 602.78,42.85" fill="#333"/><circle cx="598.2" cy="43.3" r="2.1" fill="#e1e1e1"/>
<text x="701.3" y="46" font-size="16.5" font-weight="bold" font-family="'Liberation Sans',sans-serif" fill="#000" stroke="#000" stroke-width="1">C</text>
<text x="713.6" y="45" font-size="9.5" font-weight="bold" font-family="'Liberation Sans',sans-serif" fill="#000" stroke="#000" stroke-width="0.45">#</text>
<polygon points="936.00,34.16 940.16,36.16 940.16,40.49 936.00,42.49 931.84,40.49 931.84,36.16" fill="#212529" stroke="#212529" stroke-width="0.7" stroke-linejoin="round"/><polygon points="936.00,35.10 938.95,36.45 936.00,37.79 933.05,36.45" fill="#e1e1e1"/><polygon points="937.16,39.58 939.58,38.24 939.58,40.20 937.16,41.64" fill="#e1e1e1"/><polygon points="931.52,40.26 935.69,42.26 935.69,46.59 931.52,48.59 927.36,46.59 927.36,42.26" fill="#212529" stroke="#212529" stroke-width="0.7" stroke-linejoin="round"/><polygon points="931.52,41.20 934.48,42.55 931.52,43.89 928.57,42.55" fill="#e1e1e1"/><polygon points="932.69,45.68 935.11,44.34 935.11,46.30 932.69,47.74" fill="#e1e1e1"/><polygon points="940.47,40.26 944.64,42.26 944.64,46.59 940.47,48.59 936.31,46.59 936.31,42.26" fill="#212529" stroke="#212529" stroke-width="0.7" stroke-linejoin="round"/><polygon points="940.47,41.20 943.43,42.55 940.47,43.89 937.52,42.55" fill="#e1e1e1"/><polygon points="941.64,45.68 944.05,44.34 944.05,46.30 941.64,47.74" fill="#e1e1e1"/>
<path d="M72,159.3 V173.5 H91" fill="none" stroke="#808080" stroke-width="2"/>
<path d="M75,170.7 V166.9 L78.7,161 L82.5,164.8 L85.9,163.1 L89.7,170.7 Z" fill="#22b14c"/>
<path d="M296.6,174.9 V161.1 H316" fill="none" stroke="#808080" stroke-width="2"/>
<path d="M299,164 H314.2 L310,170.7 L307,169.3 L303.2,173 Z" fill="#ed1c24"/>
<line x1="552" x2="570.5" y1="175.4" y2="175.4" stroke="#777" stroke-width="1"/>
<rect x="553.0" y="170.3" width="1.6" height="3.9" fill="#ed1c24"/>
<rect x="555.3" y="166.9" width="1.6" height="7.3" fill="#ed1c24"/>
<rect x="557.8" y="164.1" width="1.6" height="10.1" fill="#ed1c24"/>
<rect x="560.3" y="160.1" width="1.6" height="14.1" fill="#22b14c"/>
<rect x="563.1" y="159" width="1.6" height="15.2" fill="#22b14c"/>
<rect x="565.6" y="161.8" width="1.6" height="12.4" fill="#22b14c"/>
<rect x="568.2" y="166.3" width="1.6" height="7.9" fill="#22b14c"/>
<circle cx="787.8" cy="166.9" r="9.2" fill="none" stroke="#444" stroke-width="1.2"/><path d="M787.8,157.5 V166.9 H797 M787.8,166.9 L794.4,173.5" fill="none" stroke="#444" stroke-width="1.2"/>
<rect x="1003.5" y="157" width="20.3" height="19.8" fill="#fff"/>
<line x1="1003.5" x2="1023.8" y1="157.3" y2="157.3" stroke="#999" stroke-width="0.8"/>
<line x1="1003.5" x2="1023.8" y1="166.7" y2="166.7" stroke="#999" stroke-width="0.8"/>
<line x1="1003.5" x2="1023.8" y1="176.6" y2="176.6" stroke="#999" stroke-width="0.8"/>
<text x="1005" y="165" font-size="7.6" font-weight="bold" font-family="'Liberation Sans',sans-serif" fill="#0f5f5f" textLength="16.5" lengthAdjust="spacingAndGlyphs">ABC</text>
<text x="1005" y="174.8" font-size="7.6" font-weight="bold" font-family="'Liberation Sans',sans-serif" fill="#0f5f5f" textLength="15" lengthAdjust="spacingAndGlyphs">DEF</text>
<path d="M1220.5,157.7 H1228.5 L1233,162.2 V175.2 Q1233,176.2 1232,176.2 H1220.5 Q1219.5,176.2 1219.5,175.2 V158.7 Q1219.5,157.7 1220.5,157.7 Z M1228.3,157.9 V162.4 H1232.8" fill="none" stroke="#333" stroke-width="1.2"/>
<line x1="1222.5" x2="1230.2" y1="166.9" y2="166.9" stroke="#333" stroke-width="1.1"/>
<line x1="1222.5" x2="1230.2" y1="169.2" y2="169.2" stroke="#333" stroke-width="1.1"/>
<line x1="1222.5" x2="1230.2" y1="171.5" y2="171.5" stroke="#333" stroke-width="1.1"/>
<rect x="70.2" y="187.9" width="1.7" height="1.7" fill="#3a5fb0"/>
<rect x="67.2" y="189.2" width="1.7" height="1.7" fill="#3a5fb0"/>
<rect x="71.2" y="191.0" width="1.7" height="1.7" fill="#3a5fb0"/>
<rect x="60.4" y="191.0" width="1.7" height="1.7" fill="#3a5fb0"/>
<rect x="64.4" y="193.6" width="1.7" height="1.7" fill="#3a5fb0"/>
<rect x="57.0" y="194.4" width="1.7" height="1.7" fill="#3a5fb0"/>
<rect x="72.0" y="197.8" width="1.7" height="1.7" fill="#3a5fb0"/>
<rect x="68.6" y="199.3" width="1.7" height="1.7" fill="#3a5fb0"/>
<rect x="63.6" y="200.2" width="1.7" height="1.7" fill="#3a5fb0"/>
<rect x="57.0" y="203.7" width="1.7" height="1.7" fill="#c01030"/>
<rect x="65.3" y="203.7" width="1.7" height="1.7" fill="#c01030"/>
<rect x="69.3" y="202.9" width="1.7" height="1.7" fill="#c01030"/>
<line x1="55.1" x2="75.2" y1="200.5" y2="195" stroke="#7a4a3a" stroke-width="1.2"/>
<path d="M270.2,198.7 L272.5,195 L275,191.2 L277,194.5 L278.6,192.8 L281.6,198.7 Z" fill="#0e8a8a"/>
<path d="M263.9,199.8 H270.2 L266.8,204.1 Z" fill="#0e8a8a"/>
<line x1="263.5" x2="282" y1="199.2" y2="199.2" stroke="#6a5a55" stroke-width="1"/>
<rect x="461.2" y="187.2" width="19.9" height="19.5" fill="#fff"/>
<line x1="462" x2="463.9" y1="189.4" y2="189.4" stroke="#4040ff" stroke-width="0.9"/>
<line x1="464.4" x2="467.6" y1="189.4" y2="189.4" stroke="#777" stroke-width="0.9"/>
<line x1="468.7" x2="473.8" y1="189.4" y2="189.4" stroke="#777" stroke-width="0.9"/>
<line x1="474.9" x2="479.4" y1="189.4" y2="189.4" stroke="#777" stroke-width="0.9"/>
<line x1="462" x2="463.9" y1="192" y2="192" stroke="#4040ff" stroke-width="0.9"/>
<line x1="464.4" x2="467.6" y1="192" y2="192" stroke="#777" stroke-width="0.9"/>
<line x1="468.7" x2="473.8" y1="192" y2="192" stroke="#777" stroke-width="0.9"/>
<line x1="474.9" x2="479.4" y1="192" y2="192" stroke="#777" stroke-width="0.9"/>
<line x1="462" x2="463.9" y1="194.5" y2="194.5" stroke="#4040ff" stroke-width="0.9"/>
<line x1="464.4" x2="467.6" y1="194.5" y2="194.5" stroke="#777" stroke-width="0.9"/>
<line x1="468.7" x2="473.8" y1="194.5" y2="194.5" stroke="#777" stroke-width="0.9"/>
<line x1="474.9" x2="479.4" y1="194.5" y2="194.5" stroke="#777" stroke-width="0.9"/>
<line x1="462" x2="463.9" y1="197.1" y2="197.1" stroke="#4040ff" stroke-width="0.9"/>
<line x1="464.4" x2="467.6" y1="197.1" y2="197.1" stroke="#777" stroke-width="0.9"/>
<line x1="468.7" x2="473.8" y1="197.1" y2="197.1" stroke="#777" stroke-width="0.9"/>
<line x1="474.9" x2="479.4" y1="197.1" y2="197.1" stroke="#777" stroke-width="0.9"/>
<line x1="462" x2="463.9" y1="199.6" y2="199.6" stroke="#4040ff" stroke-width="0.9"/>
<line x1="464.4" x2="467.6" y1="199.6" y2="199.6" stroke="#777" stroke-width="0.9"/>
<line x1="468.7" x2="473.8" y1="199.6" y2="199.6" stroke="#777" stroke-width="0.9"/>
<line x1="474.9" x2="479.4" y1="199.6" y2="199.6" stroke="#777" stroke-width="0.9"/>
<line x1="462" x2="463.9" y1="202.2" y2="202.2" stroke="#4040ff" stroke-width="0.9"/>
<line x1="464.4" x2="467.6" y1="202.2" y2="202.2" stroke="#777" stroke-width="0.9"/>
<line x1="468.7" x2="473.8" y1="202.2" y2="202.2" stroke="#777" stroke-width="0.9"/>
<line x1="474.9" x2="479.4" y1="202.2" y2="202.2" stroke="#777" stroke-width="0.9"/>
<line x1="462" x2="463.9" y1="204.6" y2="204.6" stroke="#4040ff" stroke-width="0.9"/>
<line x1="464.4" x2="467.6" y1="204.6" y2="204.6" stroke="#777" stroke-width="0.9"/>
<line x1="468.7" x2="473.8" y1="204.6" y2="204.6" stroke="#777" stroke-width="0.9"/>
<line x1="474.9" x2="479.4" y1="204.6" y2="204.6" stroke="#777" stroke-width="0.9"/>
<rect x="638.2" y="187.4" width="1.5" height="1.5" fill="#3a5fb0"/>
<rect x="642.4" y="188.2" width="1.5" height="1.5" fill="#3a5fb0"/>
<rect x="636.0" y="190.1" width="1.5" height="1.5" fill="#3a5fb0"/>
<rect x="639.6" y="190.8" width="1.5" height="1.5" fill="#3a5fb0"/>
<rect x="643.5" y="190.4" width="1.5" height="1.5" fill="#3a5fb0"/>
<rect x="646.3" y="190.1" width="1.5" height="1.5" fill="#3a5fb0"/>
<rect x="631.7" y="191.2" width="1.5" height="1.5" fill="#3a5fb0"/>
<rect x="633.4" y="195.5" width="1.5" height="1.5" fill="#3a5fb0"/>
<rect x="636.8" y="196.6" width="1.5" height="1.5" fill="#3a5fb0"/>
<rect x="641.3" y="195.7" width="1.5" height="1.5" fill="#3a5fb0"/>
<rect x="647.5" y="195.5" width="1.5" height="1.5" fill="#3a5fb0"/>
<rect x="639.4" y="198.9" width="1.5" height="1.5" fill="#3a5fb0"/>
<rect x="644.1" y="198.5" width="1.5" height="1.5" fill="#3a5fb0"/>
<rect x="635.9" y="201.7" width="1.5" height="1.5" fill="#c01030"/>
<rect x="640.7" y="202.5" width="1.5" height="1.5" fill="#c01030"/>
<rect x="645.0" y="201.7" width="1.5" height="1.5" fill="#c01030"/>
<line x1="630.7" x2="650.6" y1="194" y2="194" stroke="#7a4a3a" stroke-width="1.3"/>
<line x1="847" x2="865" y1="199.4" y2="199.4" stroke="#666" stroke-width="0.9"/>
<rect x="850" y="190" width="1.4" height="9.0" fill="#22b14c"/>
<rect x="852.3" y="192.8" width="1.3" height="6.2" fill="#22b14c"/>
<rect x="860.1" y="190" width="1.4" height="9.0" fill="#22b14c"/>
<rect x="862.4" y="192.8" width="1.3" height="6.2" fill="#22b14c"/>
<rect x="856.8" y="201" width="2.2" height="3.9" fill="#ed1c24"/><rect x="855.2" y="201" width="1.6" height="1.1" fill="#ed1c24"/>
<rect x="1066" y="198.5" width="2.3" height="8.2" fill="#22b14c"/>
<rect x="1070" y="195" width="2.6" height="11.7" fill="#22b14c"/>
<rect x="1074.3" y="191.9" width="2.5" height="14.8" fill="#22b14c"/>
<rect x="1078.7" y="188.9" width="2.3" height="17.8" fill="#22b14c"/>
<rect x="1223.9" y="188.1" width="16.3" height="16.8" fill="#fff"/>
<line x1="1223.9" x2="1240.2" y1="188.7" y2="188.7" stroke="#000" stroke-width="1.6"/>
<line x1="1223.9" x2="1240.2" y1="191.9" y2="191.9" stroke="#000" stroke-width="0.9"/>
<line x1="1223.9" x2="1240.2" y1="195.1" y2="195.1" stroke="#000" stroke-width="0.9"/>
<line x1="1223.9" x2="1240.2" y1="198.4" y2="198.4" stroke="#000" stroke-width="0.9"/>
<line x1="1223.9" x2="1240.2" y1="201.6" y2="201.6" stroke="#000" stroke-width="0.9"/>
<line x1="1223.9" x2="1240.2" y1="204.3" y2="204.3" stroke="#000" stroke-width="1.4"/>
<line x1="1228" x2="1228" y1="188.1" y2="204.9" stroke="#000" stroke-width="1"/>
<line x1="1230.7" x2="1230.7" y1="188.1" y2="204.9" stroke="#000" stroke-width="1"/>
<line x1="1233.5" x2="1233.5" y1="188.1" y2="204.9" stroke="#000" stroke-width="1"/>
<line x1="1236.1" x2="1236.1" y1="188.1" y2="204.9" stroke="#000" stroke-width="1"/>
<line x1="1238.9" x2="1238.9" y1="188.1" y2="204.9" stroke="#000" stroke-width="1"/>
</svg>
</div></body></html>
